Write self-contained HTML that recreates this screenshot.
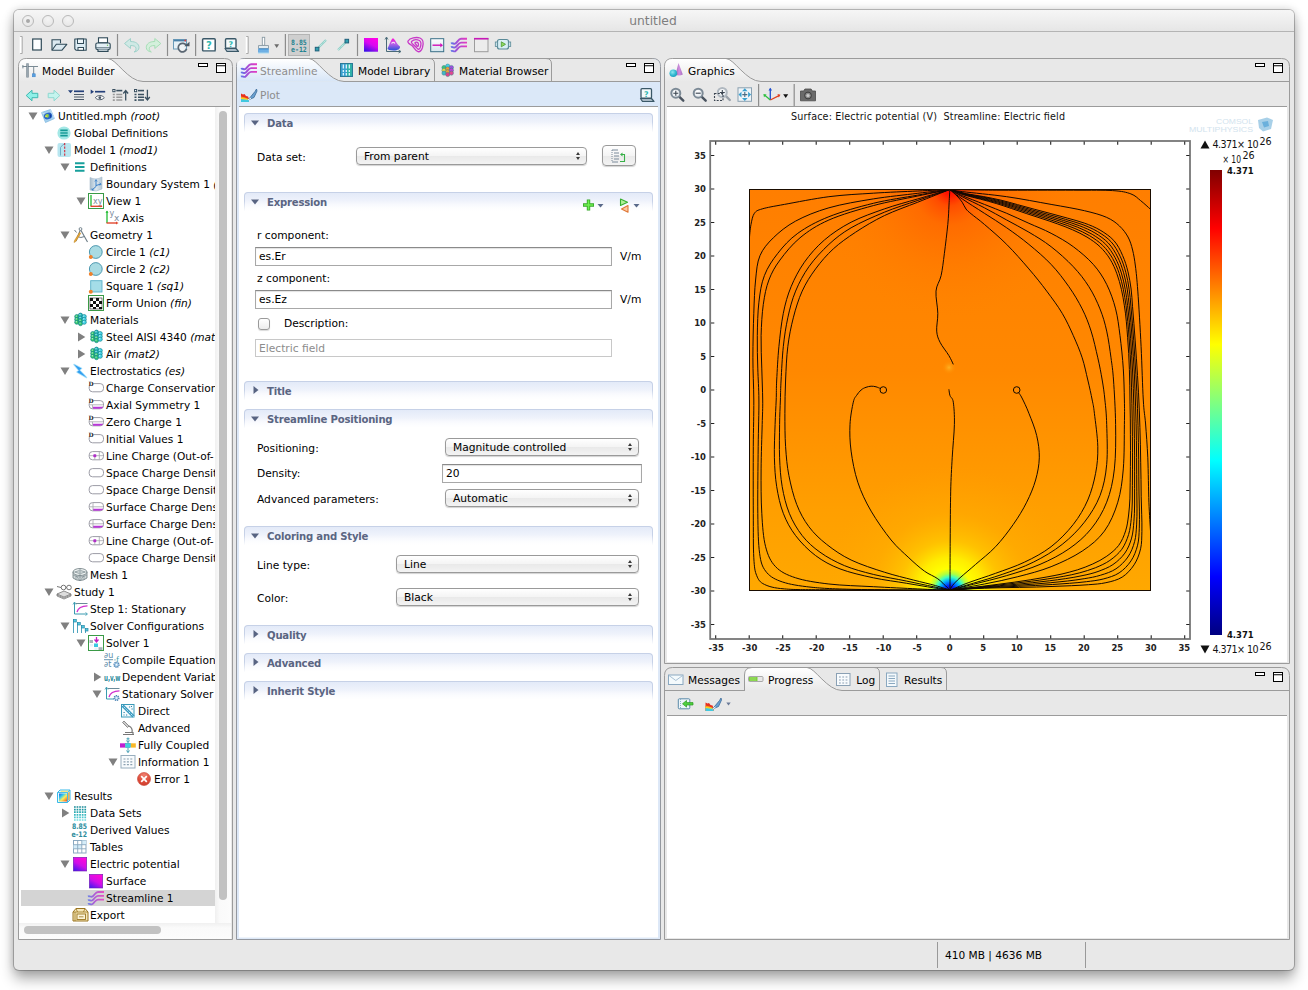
<!DOCTYPE html>
<html>
<head>
<meta charset="utf-8">
<title>untitled</title>
<style>
*{box-sizing:border-box;margin:0;padding:0}
html,body{width:1308px;height:990px;overflow:hidden;background:#fff}
body{font-family:"DejaVu Sans","Liberation Sans",sans-serif;font-size:10.6px;color:#000;position:relative}
.abs{position:absolute}
#win{position:absolute;left:14px;top:10px;width:1280px;height:960px;background:#e8e8e8;border-radius:5px;box-shadow:0 0 0 1px rgba(0,0,0,.22),0 9px 14px rgba(0,0,0,.32),0 0 10px rgba(0,0,0,.18)}
#titlebar{position:absolute;left:0;top:0;width:1280px;height:22px;border-radius:5px 5px 0 0;background:linear-gradient(#f6f6f6,#e6e6e6);border-bottom:1px solid #b4b4b4}
#title{position:absolute;left:-1px;width:1280px;top:4px;text-align:center;font-size:12.3px;color:#7e7e7e}
.tl{position:absolute;top:5px;width:12px;height:12px;border-radius:50%;border:1px solid #b9b9b9;background:radial-gradient(circle at 50% 30%,#f4f4f4,#e4e4e4)}
.panel{position:absolute;border:1px solid #9c9c9c;background:#e8e8e8}
.t{position:absolute;white-space:nowrap;line-height:14px}
svg{position:absolute;overflow:visible}
</style>
</head>
<body>
<div id="win">
<div id="titlebar">
<div class="tl" style="left:8px"><div style="position:absolute;left:3px;top:3px;width:4px;height:4px;border-radius:50%;background:#a8a8a8"></div></div>
<div class="tl" style="left:28px"></div>
<div class="tl" style="left:48px"></div>
<div id="title">untitled</div>
</div>
</div>
<style>
.pb{stroke:#9b9b9b;stroke-width:1;fill:none}
.tabtxt{position:absolute;white-space:nowrap;font-size:10.6px;line-height:14px}
.mm{position:absolute;border:1.5px solid #000;background:#fff}
.mx{box-shadow:inset 0 1.2px 0 #fff,inset 0 2.2px 0 #000}
</style>
<!-- LEFT PANEL : Model Builder -->
<svg class="abs" style="left:0;top:0" width="1308" height="990" viewBox="0 0 1308 990">
<defs>
<linearGradient id="gTabG" x1="0" y1="0" x2="0" y2="1"><stop offset="0" stop-color="#ffffff"/><stop offset="1" stop-color="#e8e8e8"/></linearGradient>
<linearGradient id="gTabB" x1="0" y1="0" x2="0" y2="1"><stop offset="0" stop-color="#ffffff"/><stop offset="1" stop-color="#d6e5f7"/></linearGradient>
</defs>
<!-- left panel -->
<path class="pb" d="M18.5 939.5 V66.5 Q18.5 58.5 26.5 58.5 H224.5 Q232.5 58.5 232.5 66.5 V939.5 Z" fill="#e8e8e8"/>
<path d="M19 82 V66.5 Q19 59 26.5 59 H108 C116 59 128 81.5 143 81.5 H19Z" fill="url(#gTabG)"/>
<path class="pb" d="M108 58.5 C116 58.5 128 81.5 143 81.5 H232"/>
<line class="pb" x1="19" y1="106.500" x2="230" y2="106.500"/>
<!-- middle panel -->
<path d="M236.500 939.5 V66.5 Q236.500 58.5 244.5 58.5 H652.5 Q660.5 58.5 660.5 66.5 V939.5 Z" fill="#dde8f7" stroke="#94989f"/>
<path d="M237 59 H652.5 Q660 59 660 66.500 V81.5 H237Z" fill="#e8e8e8"/>
<path d="M237 82 V66.5 Q237 59 244.5 59 H309 C317 59 329 81.5 344 81.5 H237Z" fill="url(#gTabB)"/>
<path class="pb" d="M244.5 58.5 H652.5"/>
<path class="pb" d="M309 58.5 C317 58.5 329 81.5 344 81.5 H660"/>
<path class="pb" d="M429 58.5 Q434.500 58.500 434.500 64 V81.500"/>
<path class="pb" d="M546 58.5 Q551.500 58.500 551.500 64 V81.500"/>
<rect x="237" y="82" width="423" height="24" fill="#dbe8f8"/>
<line class="pb" x1="239" y1="106.500" x2="658" y2="106.500"/>
<rect x="239" y="107" width="419" height="830.5" fill="#fff"/>
<!-- graphics panel -->
<path class="pb" d="M664.500 663.500 V66.5 Q664.500 58.5 672.5 58.5 H1281.500 Q1289.500 58.5 1289.500 66.5 V663.5 Z" fill="#e8e8e8"/>
<path d="M665 82 V66.5 Q665 59 672.5 59 H726 C734 59 746 81.5 761 81.5 H665Z" fill="url(#gTabG)"/>
<path class="pb" d="M726 58.5 C734 58.5 746 81.5 761 81.5 H1289"/>
<line class="pb" x1="667" y1="106.500" x2="1287" y2="106.500"/>
<rect x="667" y="107" width="620" height="555" fill="#fff"/>
<!-- bottom right panel -->
<path class="pb" d="M664.500 939.500 V675.500 Q664.500 667.500 672.5 667.500 H1281.500 Q1289.500 667.5 1289.500 675.500 V939.500 Z" fill="#e8e8e8"/>
<path d="M744.500 691 V675 Q744.500 668 752 668 H807 C815 668 827 690.5 842 690.5 H745Z" fill="url(#gTabG)"/>
<path class="pb" d="M744.500 690.500 V675 Q744.500 667.500 752 667.500 H807 C815 667.5 827 690.5 842 690.5 H1289"/>
<line class="pb" x1="665" y1="690.500" x2="745" y2="690.500"/>
<path class="pb" d="M874 667.500 Q879.500 667.500 879.500 673 V690.500"/>
<path class="pb" d="M941 667.500 Q946.500 667.500 946.500 673 V690.500"/>
<line class="pb" x1="667" y1="715.500" x2="1287" y2="715.500"/>
<rect x="667" y="716" width="620" height="222" fill="#fff"/>
<!-- status bar -->
<line x1="937.500" y1="942" x2="937.500" y2="968" stroke="#999"/>
<line x1="1085.500" y1="942" x2="1085.500" y2="968" stroke="#999"/>
</svg>
<div class="tabtxt" style="left:42px;top:63.7px">Model Builder</div>
<div class="tabtxt" style="left:260px;top:63.7px;color:#8c8c8c">Streamline</div>
<div class="tabtxt" style="left:358px;top:63.7px">Model Library</div>
<div class="tabtxt" style="left:459px;top:63.7px">Material Browser</div>
<div class="tabtxt" style="left:688px;top:63.7px">Graphics</div>
<div class="tabtxt" style="left:688px;top:672.7px">Messages</div>
<div class="tabtxt" style="left:768px;top:672.7px">Progress</div>
<div class="tabtxt" style="left:856.3px;top:672.7px">Log</div>
<div class="tabtxt" style="left:904px;top:672.7px">Results</div>
<div class="tabtxt" style="left:260px;top:88px;color:#8c8c8c">Plot</div>
<div class="tabtxt" style="left:945px;top:948px">410 MB | 4636 MB</div>
<!-- min/max icons -->
<div class="mm" style="left:198px;top:63px;width:10px;height:4px"></div><div class="mm mx" style="left:216px;top:63px;width:10px;height:10px"></div>
<div class="mm" style="left:626px;top:63px;width:10px;height:4px"></div><div class="mm mx" style="left:644px;top:63px;width:10px;height:10px"></div>
<div class="mm" style="left:1255px;top:63px;width:10px;height:4px"></div><div class="mm mx" style="left:1273px;top:63px;width:10px;height:10px"></div>
<div class="mm" style="left:1255px;top:672px;width:10px;height:4px"></div><div class="mm mx" style="left:1273px;top:672px;width:10px;height:10px"></div>
<style>
#tree{position:absolute;left:21px;top:107px;width:194px;height:816px;background:#fff;overflow:hidden}
#tree .r{position:absolute;left:0;width:194px;height:17px}
#tree .r.sel{background:linear-gradient(#d4d4d4,#d4d4d4) 0 0/100% 16px no-repeat}
#tree .tx{position:absolute;top:0;line-height:17px;white-space:nowrap;font-size:10.6px}
#tree .tx i{font-style:italic}
#tree svg.ic{position:absolute;width:16px;height:16px;top:0.5px}
#tree svg.ar{position:absolute;width:10px;height:10px;top:3.2px}
</style>
<svg width="0" height="0" style="position:absolute"><defs><radialGradient id="gErr" cx=".5" cy=".2" r=".9"><stop offset="0" stop-color="#f08070"/><stop offset=".6" stop-color="#dc4a38"/><stop offset="1" stop-color="#c83828"/></radialGradient><linearGradient id="gRes" x1="0" y1="0" x2="1" y2="1"><stop offset="0" stop-color="#2060e0"/><stop offset=".3" stop-color="#30c8f0"/><stop offset=".55" stop-color="#f8f060"/><stop offset=".8" stop-color="#f89030"/><stop offset="1" stop-color="#e83020"/></linearGradient><linearGradient id="gBs" x1="0" y1="0" x2="1" y2="0"><stop offset="0" stop-color="#a8bccc"/><stop offset=".5" stop-color="#dce8f0"/><stop offset="1" stop-color="#b4c6d4"/></linearGradient><linearGradient id="gEpot" x1=".7" y1="0" x2=".15" y2="1"><stop offset="0" stop-color="#ff08d8"/><stop offset=".5" stop-color="#d010e8"/><stop offset="1" stop-color="#4818f0"/></linearGradient><linearGradient id="gStrT" x1="0" y1="0" x2="16" y2="0" gradientUnits="userSpaceOnUse"><stop offset="0" stop-color="#6a80e8"/><stop offset=".35" stop-color="#a860d8"/><stop offset="1" stop-color="#e850c0"/></linearGradient></defs></svg>
<div class="abs" style="left:19px;top:107px;width:212px;height:832px;background:#fff"></div>
<div class="abs" style="left:215px;top:107px;width:16px;height:816px;background:linear-gradient(90deg,#f0f0f0,#fafafa 30%,#fcfcfc)"></div>
<div class="abs" style="left:219px;top:111px;width:8px;height:789px;border-radius:4px;background:#c2c2c2"></div>
<div class="abs" style="left:19px;top:923px;width:212px;height:16px;background:linear-gradient(#f0f0f0,#fafafa 30%,#fcfcfc)"></div>
<div class="abs" style="left:24px;top:926px;width:137px;height:8px;border-radius:4px;background:#c2c2c2"></div>
<div id="tree">
<div class="r" style="top:0.5px"><svg class="ar" style="left:7px" viewBox="0 0 10 10"><path d="M.5 1.500H9.500L5 9Z" fill="#808080"/></svg><svg class="ic" style="left:19px" viewBox="0 0 16 16"><path d="M1.500 4.500 L10.500 1.500 L14.500 10.500 L5.500 14.500Z" fill="#a4d0ee" stroke="#7ab4de" stroke-width=".7" stroke-linejoin="round"/><path d="M10.500 1.500L11.500 5L14.500 10.500M1.500 4.500L4.500 6" stroke="#d8ecfa" stroke-width=".7" fill="none"/><ellipse cx="8" cy="8" rx="4.200" ry="3.300" transform="rotate(-20 8 8)" fill="#2a66c8"/><path d="M5.200 7.500Q6.500 5.500 8.500 6.300Q9.500 8 8 9.800Q6 10 5.200 7.500Z" fill="#8fd048"/><path d="M5 8Q6 7 7 8.200Q6.300 9.500 5.300 9Z" fill="#f0e050"/><path d="M9.500 5.800Q12.500 7.500 10 10.500Q11 8 9.500 5.800Z" fill="#0c2f88"/></svg><span class="tx" style="left:37px">Untitled.mph<i> (root)</i></span></div>
<div class="r" style="top:17.5px"><svg class="ic" style="left:35px" viewBox="0 0 16 16"><circle cx="8" cy="8" r="6.600" fill="#a4e8e6"/><path d="M4.300 5.300H11.700M4.300 8H11.700M4.300 10.700H11.700" stroke="#149a96" stroke-width="1.700"/></svg><span class="tx" style="left:53px">Global Definitions</span></div>
<div class="r" style="top:34.5px"><svg class="ar" style="left:23px" viewBox="0 0 10 10"><path d="M.5 1.500H9.500L5 9Z" fill="#808080"/></svg><svg class="ic" style="left:35px" viewBox="0 0 16 16"><rect x="1.500" y="1" width="13.500" height="14" rx="2" fill="#b8e6f0"/><path d="M4.500 13.500V5.500Q6 3 9 1.500" fill="none" stroke="#6aa8c0" stroke-width=".9"/><path d="M8.700 1V15" stroke="#d6283a" stroke-width="1.100" stroke-dasharray="2.200 1.300"/></svg><span class="tx" style="left:53px">Model 1<i> (mod1)</i></span></div>
<div class="r" style="top:51.5px"><svg class="ar" style="left:39px" viewBox="0 0 10 10"><path d="M.5 1.500H9.500L5 9Z" fill="#808080"/></svg><svg class="ic" style="left:51px" viewBox="0 0 16 16"><path d="M3 4.300H12.500M3 8H12.500M3 11.700H12.500" stroke="#18a09c" stroke-width="1.900"/></svg><span class="tx" style="left:69px">Definitions</span></div>
<div class="r" style="top:68.5px"><svg class="ic" style="left:67px" viewBox="0 0 16 16"><path d="M2 1.500 Q8 4.500 14 1 V13 Q8 16.500 2 14Z" fill="url(#gBs)" stroke="#a8bccc" stroke-width=".6"/><path d="M8 4V10.500L4 14M8 9.500L13 8" stroke="#3b80c8" stroke-width="1" fill="none"/><path d="M6.800 5.500L8 3.500L9.200 5.500M11.500 7L13.200 8L11.800 9.500M4 12.300V14H5.800" stroke="#3b80c8" stroke-width=".8" fill="none"/></svg><span class="tx" style="left:85px">Boundary System 1<i> (sys1)</i></span></div>
<div class="r" style="top:85.5px"><svg class="ar" style="left:55px" viewBox="0 0 10 10"><path d="M.5 1.500H9.500L5 9Z" fill="#808080"/></svg><svg class="ic" style="left:67px" viewBox="0 0 16 16"><rect x=".5" y=".5" width="15" height="15" fill="#fff" stroke="#3a9a46" stroke-width="1"/><path d="M3 2V13" stroke="#30c040" stroke-width="1.400"/><path d="M2.500 13.300H14" stroke="#e04830" stroke-width="1.400"/><path d="M12.500 12L14.500 13.300L12.500 14.600Z" fill="#e04830"/><text x="5" y="10.500" font-size="9.500" textLength="9.500" lengthAdjust="spacingAndGlyphs" font-family="'DejaVu Sans','Liberation Sans',sans-serif" fill="#7a8a9c">xy</text></svg><span class="tx" style="left:85px">View 1</span></div>
<div class="r" style="top:102.5px"><svg class="ic" style="left:83px" viewBox="0 0 16 16"><path d="M3 1V13" stroke="#30c040" stroke-width="1.400"/><path d="M1.500 3L3 .5L4.500 3Z" fill="#30c040"/><path d="M2.500 13H13" stroke="#e04830" stroke-width="1.400"/><path d="M12 11.500L14.500 13L12 14.500Z" fill="#e04830"/><text x="5.500" y="5.500" font-size="8" font-family="'DejaVu Sans','Liberation Sans',sans-serif" fill="#7a8a9c">y</text><text x="10" y="11" font-size="9" font-family="'DejaVu Sans','Liberation Sans',sans-serif" fill="#7a8a9c">x</text></svg><span class="tx" style="left:101px">Axis</span></div>
<div class="r" style="top:119.5px"><svg class="ar" style="left:39px" viewBox="0 0 10 10"><path d="M.5 1.500H9.500L5 9Z" fill="#808080"/></svg><svg class="ic" style="left:51px" viewBox="0 0 16 16"><path d="M8.500 2.500 L4 14" stroke="#6a7a84" stroke-width="1.100"/><path d="M8.500 2.500 L15.500 15" stroke="#6a7a84" stroke-width="1.100"/><path d="M5 9.500 Q9 11.500 12.500 9.500" stroke="#6a7a84" stroke-width="1" fill="none"/><circle cx="8.500" cy="2" r="1.400" fill="#fff" stroke="#6a7a84" stroke-width=".9"/><path d="M2.500 3L4.500 5.500" stroke="#6a7a84" stroke-width="1"/><path d="M7.500 5.500 L2.500 13.500 L2 15.500 L3.800 14.500 L8.800 6.300Z" fill="#eaa838" stroke="#b8801e" stroke-width=".5"/></svg><span class="tx" style="left:69px">Geometry 1</span></div>
<div class="r" style="top:136.5px"><svg class="ic" style="left:67px" viewBox="0 0 16 16"><circle cx="7.800" cy="8" r="6.400" fill="#a9dbe3" stroke="#3f8fa8" stroke-width=".9"/><circle cx="2.800" cy="13" r="2" fill="#f0802a"/></svg><span class="tx" style="left:85px">Circle 1<i> (c1)</i></span></div>
<div class="r" style="top:153.5px"><svg class="ic" style="left:67px" viewBox="0 0 16 16"><circle cx="7.800" cy="8" r="6.400" fill="#a9dbe3" stroke="#3f8fa8" stroke-width=".9"/><circle cx="2.800" cy="13" r="2" fill="#f0802a"/></svg><span class="tx" style="left:85px">Circle 2<i> (c2)</i></span></div>
<div class="r" style="top:170.5px"><svg class="ic" style="left:67px" viewBox="0 0 16 16"><rect x="2.700" y="2.700" width="11.300" height="11.300" fill="#a4dde8" stroke="#5ab0c8" stroke-width=".9"/><circle cx="2.800" cy="13.700" r="2" fill="#f0802a"/></svg><span class="tx" style="left:85px">Square 1<i> (sq1)</i></span></div>
<div class="r" style="top:187.5px"><svg class="ic" style="left:67px" viewBox="0 0 16 16"><rect x=".5" y=".5" width="15" height="15" fill="#fff" stroke="#3a9a46" stroke-width="1"/><rect x="2" y="3" width="12" height="11" fill="#fff" stroke="#222" stroke-width=".6"/><path d="M2 3h3v3h-3zM8 3h3v3h-3zM5 6h3v3h-3zM11 6h3v3h-3zM2 9h3v3h-3zM8 9h3v3h-3zM5 12h3v2h-3zM11 12h3v2h-3z" fill="#111"/></svg><span class="tx" style="left:85px">Form Union<i> (fin)</i></span></div>
<div class="r" style="top:204.5px"><svg class="ar" style="left:39px" viewBox="0 0 10 10"><path d="M.5 1.500H9.500L5 9Z" fill="#808080"/></svg><svg class="ic" style="left:51px" viewBox="0 0 16 16"><g stroke="#178a8f" stroke-width=".7"><circle cx="4.8" cy="4.6" r="2.100" fill="#35c468"/><circle cx="4.8" cy="7.4" r="2.100" fill="#35c468"/><circle cx="4.8" cy="10.2" r="2.100" fill="#35c468"/><circle cx="8.5" cy="3.2" r="2.100" fill="#22b4c0"/><circle cx="8.5" cy="6" r="2.100" fill="#22b4c0"/><circle cx="8.5" cy="8.8" r="2.100" fill="#30c070"/><circle cx="8.5" cy="11.6" r="2.100" fill="#30c070"/><circle cx="12.2" cy="4.6" r="2.100" fill="#45d2ea"/><circle cx="12.2" cy="7.4" r="2.100" fill="#45d2ea"/><circle cx="12.2" cy="10.2" r="2.100" fill="#45d2ea"/></g><circle cx="4.3" cy="4.1" r=".7" fill="#d8fff0" opacity=".8"/><circle cx="4.3" cy="6.9" r=".7" fill="#d8fff0" opacity=".8"/><circle cx="4.3" cy="9.7" r=".7" fill="#d8fff0" opacity=".8"/><circle cx="8.0" cy="2.7" r=".7" fill="#d8fff0" opacity=".8"/><circle cx="8.0" cy="5.5" r=".7" fill="#d8fff0" opacity=".8"/><circle cx="8.0" cy="8.3" r=".7" fill="#d8fff0" opacity=".8"/><circle cx="8.0" cy="11.1" r=".7" fill="#d8fff0" opacity=".8"/><circle cx="11.7" cy="4.1" r=".7" fill="#d8fff0" opacity=".8"/><circle cx="11.7" cy="6.9" r=".7" fill="#d8fff0" opacity=".8"/><circle cx="11.7" cy="9.7" r=".7" fill="#d8fff0" opacity=".8"/></svg><span class="tx" style="left:69px">Materials</span></div>
<div class="r" style="top:221.5px"><svg class="ar" style="left:55px" viewBox="0 0 10 10"><path d="M2 .5V9.500L9.300 5Z" fill="#808080"/></svg><svg class="ic" style="left:67px" viewBox="0 0 16 16"><g stroke="#178a8f" stroke-width=".7"><circle cx="4.8" cy="4.6" r="2.100" fill="#35c468"/><circle cx="4.8" cy="7.4" r="2.100" fill="#35c468"/><circle cx="4.8" cy="10.2" r="2.100" fill="#35c468"/><circle cx="8.5" cy="3.2" r="2.100" fill="#22b4c0"/><circle cx="8.5" cy="6" r="2.100" fill="#22b4c0"/><circle cx="8.5" cy="8.8" r="2.100" fill="#30c070"/><circle cx="8.5" cy="11.6" r="2.100" fill="#30c070"/><circle cx="12.2" cy="4.6" r="2.100" fill="#45d2ea"/><circle cx="12.2" cy="7.4" r="2.100" fill="#45d2ea"/><circle cx="12.2" cy="10.2" r="2.100" fill="#45d2ea"/></g><circle cx="4.3" cy="4.1" r=".7" fill="#d8fff0" opacity=".8"/><circle cx="4.3" cy="6.9" r=".7" fill="#d8fff0" opacity=".8"/><circle cx="4.3" cy="9.7" r=".7" fill="#d8fff0" opacity=".8"/><circle cx="8.0" cy="2.7" r=".7" fill="#d8fff0" opacity=".8"/><circle cx="8.0" cy="5.5" r=".7" fill="#d8fff0" opacity=".8"/><circle cx="8.0" cy="8.3" r=".7" fill="#d8fff0" opacity=".8"/><circle cx="8.0" cy="11.1" r=".7" fill="#d8fff0" opacity=".8"/><circle cx="11.7" cy="4.1" r=".7" fill="#d8fff0" opacity=".8"/><circle cx="11.7" cy="6.9" r=".7" fill="#d8fff0" opacity=".8"/><circle cx="11.7" cy="9.7" r=".7" fill="#d8fff0" opacity=".8"/></svg><span class="tx" style="left:85px">Steel AISI 4340<i> (mat1)</i></span></div>
<div class="r" style="top:238.5px"><svg class="ar" style="left:55px" viewBox="0 0 10 10"><path d="M2 .5V9.500L9.300 5Z" fill="#808080"/></svg><svg class="ic" style="left:67px" viewBox="0 0 16 16"><g stroke="#178a8f" stroke-width=".7"><circle cx="4.8" cy="4.6" r="2.100" fill="#35c468"/><circle cx="4.8" cy="7.4" r="2.100" fill="#35c468"/><circle cx="4.8" cy="10.2" r="2.100" fill="#35c468"/><circle cx="8.5" cy="3.2" r="2.100" fill="#22b4c0"/><circle cx="8.5" cy="6" r="2.100" fill="#22b4c0"/><circle cx="8.5" cy="8.8" r="2.100" fill="#30c070"/><circle cx="8.5" cy="11.6" r="2.100" fill="#30c070"/><circle cx="12.2" cy="4.6" r="2.100" fill="#45d2ea"/><circle cx="12.2" cy="7.4" r="2.100" fill="#45d2ea"/><circle cx="12.2" cy="10.2" r="2.100" fill="#45d2ea"/></g><circle cx="4.3" cy="4.1" r=".7" fill="#d8fff0" opacity=".8"/><circle cx="4.3" cy="6.9" r=".7" fill="#d8fff0" opacity=".8"/><circle cx="4.3" cy="9.7" r=".7" fill="#d8fff0" opacity=".8"/><circle cx="8.0" cy="2.7" r=".7" fill="#d8fff0" opacity=".8"/><circle cx="8.0" cy="5.5" r=".7" fill="#d8fff0" opacity=".8"/><circle cx="8.0" cy="8.3" r=".7" fill="#d8fff0" opacity=".8"/><circle cx="8.0" cy="11.1" r=".7" fill="#d8fff0" opacity=".8"/><circle cx="11.7" cy="4.1" r=".7" fill="#d8fff0" opacity=".8"/><circle cx="11.7" cy="6.9" r=".7" fill="#d8fff0" opacity=".8"/><circle cx="11.7" cy="9.7" r=".7" fill="#d8fff0" opacity=".8"/></svg><span class="tx" style="left:85px">Air<i> (mat2)</i></span></div>
<div class="r" style="top:255.5px"><svg class="ar" style="left:39px" viewBox="0 0 10 10"><path d="M.5 1.500H9.500L5 9Z" fill="#808080"/></svg><svg class="ic" style="left:51px" viewBox="0 0 16 16"><path d="M2 1.500 L9.500 5.500 L7.300 7 L14.500 14.500 L5 9 L7 7.500Z" fill="#2f9df0" stroke="#a8e0fa" stroke-width="1.500" stroke-linejoin="round" paint-order="stroke"/></svg><span class="tx" style="left:69px">Electrostatics<i> (es)</i></span></div>
<div class="r" style="top:272.5px"><svg class="ic" style="left:67px" viewBox="0 0 16 16"><rect x="1.200" y="3.600" width="14.300" height="8.200" rx="3.300" fill="#fff" stroke="#9c9ca6" stroke-width="1"/><rect x="0" y="1" width="5.300" height="5" fill="#fff"/><text x=".6" y="5.600" font-size="5.800" font-weight="bold" font-family="'DejaVu Serif','Liberation Serif',serif" fill="#222">D</text></svg><span class="tx" style="left:85px">Charge Conservation 1</span></div>
<div class="r" style="top:289.5px"><svg class="ic" style="left:67px" viewBox="0 0 16 16"><rect x="1.200" y="3.600" width="14.300" height="8.200" rx="3.300" fill="#fff" stroke="#9c9ca6" stroke-width="1"/><path d="M5 9.800H15.300Q14.800 11.700 11.500 11.700H5.500Q5.200 11.700 5 11.500Z" fill="#b838d8"/><path d="M1.400 7.800H15.400M4.500 7.800V11.500" stroke="#a4a4ac" stroke-width=".8" fill="none"/><rect x="0" y="1" width="5.300" height="5" fill="#fff"/><text x=".6" y="5.600" font-size="5.800" font-weight="bold" font-family="'DejaVu Serif','Liberation Serif',serif" fill="#222">D</text></svg><span class="tx" style="left:85px">Axial Symmetry 1</span></div>
<div class="r" style="top:306.5px"><svg class="ic" style="left:67px" viewBox="0 0 16 16"><rect x="1.200" y="3.600" width="14.300" height="8.200" rx="3.300" fill="#fff" stroke="#9c9ca6" stroke-width="1"/><path d="M5 9.800H15.300Q14.800 11.700 11.500 11.700H5.500Q5.200 11.700 5 11.500Z" fill="#b838d8"/><path d="M1.400 7.800H15.400M4.500 7.800V11.500" stroke="#a4a4ac" stroke-width=".8" fill="none"/><rect x="0" y="1" width="5.300" height="5" fill="#fff"/><text x=".6" y="5.600" font-size="5.800" font-weight="bold" font-family="'DejaVu Serif','Liberation Serif',serif" fill="#222">D</text></svg><span class="tx" style="left:85px">Zero Charge 1</span></div>
<div class="r" style="top:323.5px"><svg class="ic" style="left:67px" viewBox="0 0 16 16"><rect x="1.200" y="3.600" width="14.300" height="8.200" rx="3.300" fill="#fff" stroke="#9c9ca6" stroke-width="1"/><rect x="0" y="1" width="5.300" height="5" fill="#fff"/><text x=".6" y="5.600" font-size="5.800" font-weight="bold" font-family="'DejaVu Serif','Liberation Serif',serif" fill="#222">D</text></svg><span class="tx" style="left:85px">Initial Values 1</span></div>
<div class="r" style="top:340.5px"><svg class="ic" style="left:67px" viewBox="0 0 16 16"><rect x="1.200" y="3.600" width="14.300" height="8.200" rx="3.300" fill="#fff" stroke="#9c9ca6" stroke-width="1"/><path d="M1.400 7.700H15.400M11.300 3.800V11.600M6.800 7.700V11.600" stroke="#a4a4ac" stroke-width=".8"/><rect x="5.300" y="6.200" width="3" height="3" rx=".8" fill="#b030c8"/></svg><span class="tx" style="left:85px">Line Charge (Out-of-<span style="margin-left:3px">Plane) 1</span></span></div>
<div class="r" style="top:357.5px"><svg class="ic" style="left:67px" viewBox="0 0 16 16"><rect x="1.200" y="3.600" width="14.300" height="8.200" rx="3.300" fill="#fff" stroke="#9c9ca6" stroke-width="1"/></svg><span class="tx" style="left:85px">Space Charge Density 1</span></div>
<div class="r" style="top:374.5px"><svg class="ic" style="left:67px" viewBox="0 0 16 16"><rect x="1.200" y="3.600" width="14.300" height="8.200" rx="3.300" fill="#fff" stroke="#9c9ca6" stroke-width="1"/></svg><span class="tx" style="left:85px">Space Charge Density 2</span></div>
<div class="r" style="top:391.5px"><svg class="ic" style="left:67px" viewBox="0 0 16 16"><rect x="1.200" y="3.600" width="14.300" height="8.200" rx="3.300" fill="#fff" stroke="#9c9ca6" stroke-width="1"/><path d="M5 9.800H15.300Q14.800 11.700 11.500 11.700H5.500Q5.200 11.700 5 11.500Z" fill="#b838d8"/><path d="M1.400 7.800H15.400M5 3.800V11.500" stroke="#a4a4ac" stroke-width=".8" fill="none"/></svg><span class="tx" style="left:85px">Surface Charge Density 1</span></div>
<div class="r" style="top:408.5px"><svg class="ic" style="left:67px" viewBox="0 0 16 16"><rect x="1.200" y="3.600" width="14.300" height="8.200" rx="3.300" fill="#fff" stroke="#9c9ca6" stroke-width="1"/><path d="M5 9.800H15.300Q14.800 11.700 11.500 11.700H5.500Q5.200 11.700 5 11.500Z" fill="#b838d8"/><path d="M1.400 7.800H15.400M5 3.800V11.500" stroke="#a4a4ac" stroke-width=".8" fill="none"/></svg><span class="tx" style="left:85px">Surface Charge Density 2</span></div>
<div class="r" style="top:425.5px"><svg class="ic" style="left:67px" viewBox="0 0 16 16"><rect x="1.200" y="3.600" width="14.300" height="8.200" rx="3.300" fill="#fff" stroke="#9c9ca6" stroke-width="1"/><path d="M1.400 7.700H15.400M11.300 3.800V11.600M6.800 7.700V11.600" stroke="#a4a4ac" stroke-width=".8"/><rect x="5.300" y="6.200" width="3" height="3" rx=".8" fill="#b030c8"/></svg><span class="tx" style="left:85px">Line Charge (Out-of-<span style="margin-left:3px">Plane) 2</span></span></div>
<div class="r" style="top:442.5px"><svg class="ic" style="left:67px" viewBox="0 0 16 16"><rect x="1.200" y="3.600" width="14.300" height="8.200" rx="3.300" fill="#fff" stroke="#9c9ca6" stroke-width="1"/></svg><span class="tx" style="left:85px">Space Charge Density 3</span></div>
<div class="r" style="top:459.5px"><svg class="ic" style="left:51px" viewBox="0 0 16 16"><path d="M1 5 V11 Q8 16 15 11 V5" fill="#d4dadc" stroke="#6a787c" stroke-width=".8"/><ellipse cx="8" cy="5" rx="7" ry="3.500" fill="#eef2f2" stroke="#6a787c" stroke-width=".8"/><path d="M3 5 L8 3 L13 5 L8 7Z M8 1.500V8.500 M1 5H15 M4 8.500V13 M8 8.500V14 M12 8.500V13 M1 8 Q8 12 15 8 M4 8.500L8 14L12 8.500" fill="none" stroke="#7a8a8e" stroke-width=".6"/></svg><span class="tx" style="left:69px">Mesh 1</span></div>
<div class="r" style="top:476.5px"><svg class="ar" style="left:23px" viewBox="0 0 10 10"><path d="M.5 1.500H9.500L5 9Z" fill="#808080"/></svg><svg class="ic" style="left:35px" viewBox="0 0 16 16"><circle cx="7.500" cy="3.500" r="2.300" fill="#fff" stroke="#666" stroke-width=".9"/><circle cx="13" cy="3.500" r="2.300" fill="#fff" stroke="#666" stroke-width=".9"/><path d="M1 2.500 L5 3.500 M9.800 3.500H10.700" stroke="#666" stroke-width=".9"/><path d="M1 10 L8 7 L15 10 L8 13Z" fill="#ddd" stroke="#666" stroke-width=".7"/><path d="M1 10 V12 L8 15 L15 12 V10 M1 11 L8 14 L15 11" fill="none" stroke="#666" stroke-width=".7"/></svg><span class="tx" style="left:53px">Study 1</span></div>
<div class="r" style="top:493.5px"><svg class="ic" style="left:51px" viewBox="0 0 16 16"><path d="M2.500 1.500 V13 H15" fill="none" stroke="#3a9ab0" stroke-width="1"/><path d="M1 3.500L2.500 1L4 3.500M13.500 11.500L15.500 13L13.500 14.500" fill="none" stroke="#3a9ab0" stroke-width=".8"/><path d="M4 2.500H15.500" stroke="#6a8a98" stroke-width="1"/><path d="M5 11 Q6.500 5 15.500 4.800" fill="none" stroke="#d030d0" stroke-width="1.300"/></svg><span class="tx" style="left:69px">Step 1: Stationary</span></div>
<div class="r" style="top:510.5px"><svg class="ar" style="left:39px" viewBox="0 0 10 10"><path d="M.5 1.500H9.500L5 9Z" fill="#808080"/></svg><svg class="ic" style="left:51px" viewBox="0 0 16 16"><path d="M1.500 1V15M5.500 4V15M9.500 7V15M13.500 10V15" stroke="#3a9ab8" stroke-width=".9"/><rect x="1.500" y="1.500" width="2.800" height="2.500" fill="#50c8e0" stroke="#2a8aa8" stroke-width=".7"/><rect x="5.500" y="4.500" width="2.800" height="2.500" fill="#50c8e0" stroke="#2a8aa8" stroke-width=".7"/><rect x="9.500" y="7.500" width="2.800" height="2.500" fill="#50c8e0" stroke="#2a8aa8" stroke-width=".7"/><rect x="13.200" y="10.500" width="2.800" height="2.500" fill="#50c8e0" stroke="#2a8aa8" stroke-width=".7"/></svg><span class="tx" style="left:69px">Solver Configurations</span></div>
<div class="r" style="top:527.5px"><svg class="ar" style="left:55px" viewBox="0 0 10 10"><path d="M.5 1.500H9.500L5 9Z" fill="#808080"/></svg><svg class="ic" style="left:67px" viewBox="0 0 16 16"><rect x=".5" y=".5" width="15" height="15" fill="#fff" stroke="#3a9a46" stroke-width="1"/><rect x="1.500" y="5" width="3.500" height="3" fill="#a8b4b8"/><rect x="6" y="8.500" width="4" height="3.500" fill="#38c8e0"/><rect x="10.500" y="12.200" width="4" height="2.800" fill="#a8b4b8"/><rect x="2" y="9" width="3" height="2.500" fill="#e8f4f8"/><rect x="6.500" y="12.500" width="3" height="2.500" fill="#e8f4f8"/><path d="M8.500 2V6.500M6.500 4.500L8.500 7L10.500 4.500" fill="none" stroke="#c020c0" stroke-width="1.300"/></svg><span class="tx" style="left:85px">Solver 1</span></div>
<div class="r" style="top:544.5px"><svg class="ic" style="left:83px" viewBox="0 0 16 16"><text x="0" y="6.300" font-size="8" font-family="'DejaVu Sans','Liberation Sans',sans-serif" fill="#5a8aa8">∂u</text><path d="M0 7.700H9" stroke="#5a8aa8" stroke-width=".9"/><text x="0" y="15" font-size="8" font-family="'DejaVu Sans','Liberation Sans',sans-serif" fill="#5a8aa8">∂t</text><text x="9.500" y="9.500" font-size="7.500" font-family="'DejaVu Sans','Liberation Sans',sans-serif" fill="#3a9aa8">-f</text><circle cx="12.500" cy="12.700" r="2.500" fill="#a8cce8" stroke="#4a80b0" stroke-width="1.400" stroke-dasharray="1.100 .8"/><circle cx="12.500" cy="12.700" r=".8" fill="#fff"/></svg><span class="tx" style="left:101px">Compile Equations: Stationary</span></div>
<div class="r" style="top:561.5px"><svg class="ar" style="left:71px" viewBox="0 0 10 10"><path d="M2 .5V9.500L9.300 5Z" fill="#808080"/></svg><svg class="ic" style="left:83px" viewBox="0 0 16 16"><text x="0" y="11.500" font-size="9.500" font-weight="bold" textLength="16.500" lengthAdjust="spacingAndGlyphs" font-family="'DejaVu Sans','Liberation Sans',sans-serif" fill="#2a8a9a">u,v,w</text></svg><span class="tx" style="left:101px">Dependent Variables 1</span></div>
<div class="r" style="top:578.5px"><svg class="ar" style="left:71px" viewBox="0 0 10 10"><path d="M.5 1.500H9.500L5 9Z" fill="#808080"/></svg><svg class="ic" style="left:83px" viewBox="0 0 16 16"><path d="M2.500 1.500 V13 H10" fill="none" stroke="#3a9ab0" stroke-width="1"/><path d="M1 3.500L2.500 1L4 3.500" fill="none" stroke="#3a9ab0" stroke-width=".8"/><path d="M4 2.500H15.500" stroke="#6a8a98" stroke-width="1"/><path d="M5 11 Q6.500 5 15.500 4.800" fill="none" stroke="#d030d0" stroke-width="1.300"/><circle cx="12.500" cy="12" r="2.400" fill="#a8cce8" stroke="#4a80b0" stroke-width="1.300" stroke-dasharray="1.100 .8"/><circle cx="12.500" cy="12" r=".8" fill="#fff"/></svg><span class="tx" style="left:101px">Stationary Solver 1</span></div>
<div class="r" style="top:595.5px"><svg class="ic" style="left:99px" viewBox="0 0 16 16"><rect x="1.500" y="1.500" width="12.500" height="12.500" fill="#f4fbfd" stroke="#3a9ab8" stroke-width="1"/><path d="M2 2L13.500 13.500" stroke="#3a9ac0" stroke-width="3"/><path d="M2 2L13.500 13.500" stroke="#d8f0f8" stroke-width="1" stroke-dasharray="1.500 1"/><path d="M9 4h1.200M11.500 6h1.200M11 3.500h1M3.500 9.500h1.200M6 12h1.200M3.500 12h1" stroke="#2a7fa8" stroke-width="1.200"/></svg><span class="tx" style="left:117px">Direct</span></div>
<div class="r" style="top:612.5px"><svg class="ic" style="left:99px" viewBox="0 0 16 16"><path d="M4 1 L9 6 L7.500 7.500 L2.500 2.500Z" fill="#ccc" stroke="#777" stroke-width=".8"/><path d="M9 6 Q13 8 12 12.500" fill="none" stroke="#777" stroke-width="1.200"/><path d="M3 14.500H14 M5 12.500H13V14.500" fill="none" stroke="#777" stroke-width="1.200"/></svg><span class="tx" style="left:117px">Advanced</span></div>
<div class="r" style="top:629.5px"><svg class="ic" style="left:99px" viewBox="0 0 16 16"><rect x="0" y="6.300" width="5" height="4.300" fill="#c020d0"/><rect x="5.500" y="6.300" width="5" height="4.300" fill="#40d0e0" stroke="#2a9ab0" stroke-width=".5"/><rect x="11" y="6.300" width="4.800" height="4.300" fill="#f8b828"/><path d="M8 .5V5.500M6.500 3.500L8 5.500L9.500 3.500M6.500 1.800H9.500M8 11V15.500M6.500 13.500L8 15.500L9.500 13.500" fill="none" stroke="#3a9ab0" stroke-width=".9"/></svg><span class="tx" style="left:117px">Fully Coupled<span style="margin-left:4px"> 1</span></span></div>
<div class="r" style="top:646.5px"><svg class="ar" style="left:87px" viewBox="0 0 10 10"><path d="M.5 1.500H9.500L5 9Z" fill="#808080"/></svg><svg class="ic" style="left:99px" viewBox="0 0 16 16"><rect x="1" y="1.500" width="14" height="12.500" fill="#f8fbfd" stroke="#98aebe" stroke-width="1"/><path d="M3.500 5h9.500M3.500 7.800h9.500M3.500 10.600h9.500" stroke="#8aa0b0" stroke-width="1.200" stroke-dasharray="2 1.400"/></svg><span class="tx" style="left:117px">Information 1</span></div>
<div class="r" style="top:663.5px"><svg class="ic" style="left:115px" viewBox="0 0 16 16"><circle cx="8" cy="8" r="6.500" fill="url(#gErr)" stroke="#c84030" stroke-width=".6"/><path d="M5.200 5.200L10.800 10.800M10.800 5.200L5.200 10.800" stroke="#fff" stroke-width="1.700"/></svg><span class="tx" style="left:133px">Error 1</span></div>
<div class="r" style="top:680.5px"><svg class="ar" style="left:23px" viewBox="0 0 10 10"><path d="M.5 1.500H9.500L5 9Z" fill="#808080"/></svg><svg class="ic" style="left:35px" viewBox="0 0 16 16"><path d="M1.500 4.500 L4 2 H14 V12 L11.500 14.500 H1.500Z" fill="#e8f8ff" stroke="#38b8e8" stroke-width="1" stroke-linejoin="round"/><path d="M3 5.500H11.500V13.500H3Z" fill="url(#gRes)"/><path d="M1.500 4.500H11.500V14.500M11.500 4.500L14 2" fill="none" stroke="#38b8e8" stroke-width=".9"/><path d="M12.200 4.800L13.500 3.500V11.500L12.200 12.800Z" fill="#f0a030"/><path d="M4.300 3.800L5.300 2.800H12.700L11.700 3.800Z" fill="#f8e060"/></svg><span class="tx" style="left:53px">Results</span></div>
<div class="r" style="top:697.5px"><svg class="ar" style="left:39px" viewBox="0 0 10 10"><path d="M2 .5V9.500L9.300 5Z" fill="#808080"/></svg><svg class="ic" style="left:51px" viewBox="0 0 16 16"><g stroke-dasharray="1.700 .9" stroke-width="1.700"><path d="M2 2H15" stroke="#1a8a98"/><path d="M2 4.600H15" stroke="#1f98a4"/><path d="M2 7.200H15" stroke="#28a8b0"/><path d="M2 9.800H15" stroke="#38b8c0"/><path d="M2 12.400H15" stroke="#50c8d0"/><path d="M2 15H15" stroke="#70dce0"/></g></svg><span class="tx" style="left:69px">Data Sets</span></div>
<div class="r" style="top:714.5px"><svg class="ic" style="left:51px" viewBox="0 0 16 16"><text x="0" y="7" font-size="7.600" font-weight="bold" textLength="15" lengthAdjust="spacingAndGlyphs" font-family="'DejaVu Sans','Liberation Sans',sans-serif" fill="#2a8c9c">8.85</text><text x="-.5" y="14.800" font-size="7.600" font-weight="bold" textLength="15.500" lengthAdjust="spacingAndGlyphs" font-family="'DejaVu Sans','Liberation Sans',sans-serif" fill="#2a8c9c">e-12</text></svg><span class="tx" style="left:69px">Derived Values</span></div>
<div class="r" style="top:731.5px"><svg class="ic" style="left:51px" viewBox="0 0 16 16"><rect x="1.500" y="1.500" width="12.500" height="12.500" fill="#fff" stroke="#8aa8c0" stroke-width="1"/><path d="M5.700 5.700h4.100v4.100h-4.100zM9.800 1.500h4.200v4.200h-4.200zM1.500 5.700h4.200v4.100h-4.200z" fill="#d4ecf8"/><path d="M1.500 5.700H14M1.500 9.800H14M5.700 1.500V14M9.800 1.500V14" stroke="#8aa8c0" stroke-width=".9"/></svg><span class="tx" style="left:69px">Tables</span></div>
<div class="r" style="top:748.5px"><svg class="ar" style="left:39px" viewBox="0 0 10 10"><path d="M.5 1.500H9.500L5 9Z" fill="#808080"/></svg><svg class="ic" style="left:51px" viewBox="0 0 16 16"><rect x="1.300" y="1.300" width="13.400" height="13.700" fill="url(#gEpot)" stroke="#6a20b0" stroke-width=".6"/></svg><span class="tx" style="left:69px">Electric potential</span></div>
<div class="r" style="top:765.5px"><svg class="ic" style="left:67px" viewBox="0 0 16 16"><rect x="1.300" y="1.300" width="13.400" height="13.700" fill="url(#gEpot)" stroke="#6a20b0" stroke-width=".6"/></svg><span class="tx" style="left:85px">Surface</span></div>
<div class="r sel" style="top:782.5px"><svg class="ic" style="left:67px" viewBox="0 0 16 16"><g fill="none" stroke-width="1.800"><path d="M0 6.500C1.500 5.500 3 7.500 4.500 6.500C7 4.500 7.500 2 10 2H16" stroke="url(#gStrT)"/><path d="M0 10.300C1.500 9.300 3 11.300 4.500 10.300C7 8.300 7.500 5.800 10 5.800H16" stroke="url(#gStrT)"/><path d="M0 14.100C1.500 13.100 3 15.100 4.500 14.100C7 12.100 7.500 9.600 10 9.600H16" stroke="url(#gStrT)"/></g></svg><span class="tx" style="left:85px">Streamline 1</span></div>
<div class="r" style="top:799.5px"><svg class="ic" style="left:51px" viewBox="0 0 16 16"><path d="M1 5 L4 1.500 H13 L16 5 V14 H1Z" fill="#f6e8b8" stroke="#9a7420" stroke-width="1" stroke-linejoin="round"/><path d="M1 5 H16 M4 1.500 L5.500 5 M13 1.500 L11.500 5" fill="none" stroke="#9a7420" stroke-width=".8"/><rect x="5" y="7" width="8.500" height="5.500" fill="#fbf4d8" stroke="#9a7420" stroke-width=".9"/><path d="M7 9.800H11.500M3 5V14" stroke="#9a7420" stroke-width=".8"/></svg><span class="tx" style="left:69px">Export</span></div>
</div>
<style>
.sec{position:absolute;left:244px;width:409px;height:22px;border:1px solid #c6d1e7;border-bottom:none;border-radius:4px 4px 0 0;background:linear-gradient(#e3eaf8,#f1f4fc 45%,#ffffff 95%)}
.sec:after{content:"";position:absolute;left:-1px;right:-1px;top:8px;bottom:0;background:linear-gradient(rgba(255,255,255,0),#fff 80%);pointer-events:none}
#noop{} .sech{position:absolute;font-weight:bold;font-size:10.1px;letter-spacing:-.2px;color:#5a6582;white-space:nowrap;line-height:14px;left:267px}
.lbl{position:absolute;white-space:nowrap;line-height:14px;font-size:10.7px}
.dd{position:absolute;height:17.5px;border:1px solid #9a9a9a;border-radius:4px;background:linear-gradient(#ffffff,#f4f4f4 50%,#e9e9e9 51%,#f3f3f3);box-shadow:0 1px 1px rgba(0,0,0,.18);font-size:10.7px;line-height:17.6px;padding-left:7px;white-space:nowrap}
.dd:after{content:"";position:absolute;right:6.3px;top:3.7px;border:2.500px solid transparent;border-bottom:3.300px solid #3a3a3a;border-top:none}
.dd:before{content:"";position:absolute;right:6.3px;top:9.2px;border:2.500px solid transparent;border-top:3.300px solid #3a3a3a;border-bottom:none}
.inp{position:absolute;height:19px;border:1px solid #a8a8a8;border-top-color:#8a8a8a;background:#fff;font-size:10.7px;line-height:17px;padding-left:3px;white-space:nowrap;box-shadow:inset 0 1px 1px rgba(0,0,0,.12)}
</style>
<div class="sec" style="top:113px"></div><svg class="abs" style="left:251px;top:120px" width="8" height="6" viewBox="0 0 8 6"><path d="M0 .5H8L4 5.500Z" fill="#586482"/></svg><div class="sech" style="top:116.6px">Data</div>
<div class="lbl" style="left:257px;top:150.5px;color:#000">Data set:</div>
<div class="dd" style="left:356px;top:147px;width:231.3px">From parent</div>
<div class="abs" style="left:602px;top:145px;width:34px;height:21px;border:1px solid #9a9a9a;border-radius:4px;background:linear-gradient(#ffffff,#f4f4f4 50%,#e9e9e9 51%,#f3f3f3);box-shadow:0 1px 1px rgba(0,0,0,.18)"></div>
<svg class="abs" style="left:611px;top:148px" width="16" height="16" viewBox="0 0 16 16"><path d="M1 2H7M3 5H8M3 8H8M3 11H8M1 14H7" stroke="#7a8a9a" stroke-width="1"/><path d="M1 2V14" stroke="#7a8a9a" stroke-width="1" stroke-dasharray="1 1"/><path d="M9 13.500H13.500V6.500H10" fill="none" stroke="#38b048" stroke-width="1.100"/><path d="M11.500 4.500L9 6.500L11.500 8.500Z" fill="#38b048"/></svg>
<div class="sec" style="top:192.3px"></div><svg class="abs" style="left:251px;top:199.3px" width="8" height="6" viewBox="0 0 8 6"><path d="M0 .5H8L4 5.500Z" fill="#586482"/></svg><div class="sech" style="top:195.9px">Expression</div>
<svg class="abs" style="left:582px;top:198px" width="24" height="14" viewBox="0 0 24 14"><path d="M6.500 1.500V12.500M1 7H12" stroke="#34a828" stroke-width="3.400"/><path d="M6.500 2.300V11.700M1.800 7H11.200" stroke="#70f050" stroke-width="1.700"/><path d="M15.500 6H21.500L18.500 9.500Z" fill="#5a6a8a"/></svg>
<svg class="abs" style="left:618px;top:197px" width="24" height="16" viewBox="0 0 24 16"><path d="M2.500 2L9.500 5.300L2.500 8.500Z" fill="#b0f098" stroke="#38b030" stroke-width="1.100" stroke-linejoin="round"/><path d="M10 8.500L3.500 12L10 15.300Z" fill="#fcc8a0" stroke="#e07838" stroke-width="1.100" stroke-linejoin="round"/><path d="M15.500 7H21.500L18.500 10.500Z" fill="#5a6a8a"/></svg>
<div class="lbl" style="left:257px;top:228.5px;color:#000">r component:</div>
<div class="inp" style="left:255px;top:247px;width:357px;height:19px;line-height:18.6px;">es.Er</div>
<div class="lbl" style="left:620px;top:249.5px;color:#000">V/m</div>
<div class="lbl" style="left:257px;top:271.5px;color:#000">z component:</div>
<div class="inp" style="left:255px;top:290px;width:357px;height:19px;line-height:18.6px;">es.Ez</div>
<div class="lbl" style="left:620px;top:292.5px;color:#000">V/m</div>
<div class="abs" style="left:258px;top:318px;width:12px;height:12px;border:1px solid #9a9a9a;border-radius:3px;background:linear-gradient(#fff,#ececec);box-shadow:0 1px 1px rgba(0,0,0,.15)"></div>
<div class="lbl" style="left:284px;top:316.5px;color:#000">Description:</div>
<div class="inp" style="left:255px;top:339px;width:357px;height:18px;line-height:17.6px;color:#8c8c8c;border-color:#c8c8c8;box-shadow:none;">Electric field</div>
<div class="sec" style="top:381px"></div><svg class="abs" style="left:253px;top:386px" width="6" height="8" viewBox="0 0 6 8"><path d="M.5 0V8L5.500 4Z" fill="#586482"/></svg><div class="sech" style="top:384.6px">Title</div>
<div class="sec" style="top:409px"></div><svg class="abs" style="left:251px;top:416px" width="8" height="6" viewBox="0 0 8 6"><path d="M0 .5H8L4 5.500Z" fill="#586482"/></svg><div class="sech" style="top:412.6px">Streamline Positioning</div>
<div class="lbl" style="left:257px;top:441.5px;color:#000">Positioning:</div>
<div class="dd" style="left:445px;top:438px;width:194.3px">Magnitude controlled</div>
<div class="lbl" style="left:257px;top:466.5px;color:#000">Density:</div>
<div class="inp" style="left:442px;top:464.3px;width:200px;height:18.7px;line-height:18.3px;">20</div>
<div class="lbl" style="left:257px;top:492.5px;color:#000">Advanced parameters:</div>
<div class="dd" style="left:445px;top:489px;width:194.3px">Automatic</div>
<div class="sec" style="top:526px"></div><svg class="abs" style="left:251px;top:533px" width="8" height="6" viewBox="0 0 8 6"><path d="M0 .5H8L4 5.500Z" fill="#586482"/></svg><div class="sech" style="top:529.6px">Coloring and Style</div>
<div class="lbl" style="left:257px;top:558.5px;color:#000">Line type:</div>
<div class="dd" style="left:396px;top:555px;width:243.3px">Line</div>
<div class="lbl" style="left:257px;top:591.5px;color:#000">Color:</div>
<div class="dd" style="left:396px;top:588px;width:243.3px">Black</div>
<div class="sec" style="top:625px"></div><svg class="abs" style="left:253px;top:630px" width="6" height="8" viewBox="0 0 6 8"><path d="M.5 0V8L5.500 4Z" fill="#586482"/></svg><div class="sech" style="top:628.6px">Quality</div>
<div class="sec" style="top:653px"></div><svg class="abs" style="left:253px;top:658px" width="6" height="8" viewBox="0 0 6 8"><path d="M.5 0V8L5.500 4Z" fill="#586482"/></svg><div class="sech" style="top:656.6px">Advanced</div>
<div class="sec" style="top:681px"></div><svg class="abs" style="left:253px;top:686px" width="6" height="8" viewBox="0 0 6 8"><path d="M.5 0V8L5.500 4Z" fill="#586482"/></svg><div class="sech" style="top:684.6px">Inherit Style</div>
<svg class="abs" style="left:667px;top:107px" width="620" height="555" viewBox="667 107 620 555">
<defs>
<linearGradient id="gSurf" x1="0" y1="0" x2="0" y2="1"><stop offset="0" stop-color="#ff7e00"/><stop offset=".45" stop-color="#ff8800"/><stop offset=".8" stop-color="#ff9f00"/><stop offset="1" stop-color="#ffa800"/></linearGradient>
<radialGradient id="gSrc" cx="949.8" cy="189" r="130" gradientUnits="userSpaceOnUse"><stop offset="0" stop-color="#ff0000"/><stop offset=".05" stop-color="#ff1000" stop-opacity=".92"/><stop offset=".13" stop-color="#ff2c00" stop-opacity=".6"/><stop offset=".28" stop-color="#ff4800" stop-opacity=".36"/><stop offset=".6" stop-color="#ff5c00" stop-opacity=".16"/><stop offset="1" stop-color="#ff7d00" stop-opacity="0"/></radialGradient>
<radialGradient id="gSnk" cx="950" cy="590.500" r="125" gradientUnits="userSpaceOnUse"><stop offset="0.000" stop-color="#000090"/><stop offset="0.040" stop-color="#0020ff"/><stop offset="0.080" stop-color="#00b0ff"/><stop offset="0.108" stop-color="#40ffc0"/><stop offset="0.136" stop-color="#b0ff40"/><stop offset="0.176" stop-color="#ffff00"/><stop offset="0.264" stop-color="#fff000" stop-opacity="0.95"/><stop offset="0.400" stop-color="#ffd400" stop-opacity="0.62"/><stop offset="0.624" stop-color="#ffb800" stop-opacity="0.3"/><stop offset="1.000" stop-color="#ffa800" stop-opacity="0"/></radialGradient>
<radialGradient id="gSpot" cx="949" cy="367.500" r="7" gradientUnits="userSpaceOnUse"><stop offset="0" stop-color="#ffb020"/><stop offset="1" stop-color="#ff8c00" stop-opacity="0"/></radialGradient>
<linearGradient id="gJet" x1="0" y1="0" x2="0" y2="1"><stop offset="0" stop-color="#800000"/><stop offset=".125" stop-color="#ff0000"/><stop offset=".375" stop-color="#ffff00"/><stop offset=".5" stop-color="#80ff80"/><stop offset=".625" stop-color="#00ffff"/><stop offset=".875" stop-color="#0000ff"/><stop offset="1" stop-color="#000080"/></linearGradient>
<clipPath id="cpS"><rect x="749.500" y="189.500" width="401" height="401"/></clipPath>
</defs>
<rect x="749.500" y="189.500" width="401" height="401" fill="url(#gSurf)"/>
<g clip-path="url(#cpS)"><circle cx="949.8" cy="189" r="130" fill="url(#gSrc)"/><circle cx="950" cy="590.500" r="125" fill="url(#gSnk)"/><circle cx="949" cy="367.500" r="7" fill="url(#gSpot)"/>
<g fill="none" stroke="#140900" stroke-width="1" stroke-linejoin="round">
<path d="M749.3 238.9C749.6 236.5 750.1 228.7 751.0 224.4C751.9 220.1 752.5 215.9 754.4 213.3C756.3 210.7 757.2 210.4 762.2 208.9C767.2 207.4 773.3 206.4 784.4 204.4C795.5 202.4 814.1 198.6 828.9 196.7C843.7 194.8 858.5 194.1 873.3 193.2C888.1 192.2 905.0 191.6 917.8 191.0C930.5 190.4 944.5 189.8 949.8 189.5"/>
<path d="M949.8 189.5C944.5 190.1 930.5 191.7 917.8 193.3C905.0 194.9 888.1 196.5 873.3 198.9C858.5 201.3 841.8 204.1 828.9 207.8C816.0 211.5 804.9 216.1 795.6 221.1C786.3 226.1 779.2 232.1 773.3 237.8C767.4 243.6 763.0 248.6 760.0 255.6C757.0 262.6 756.6 270.4 755.6 280.0C754.6 289.6 754.2 300.3 753.8 313.3C753.3 326.3 752.9 343.4 752.9 357.8C752.9 372.2 753.7 385.2 753.8 400.0C753.9 414.8 753.4 427.8 753.3 446.7C753.2 465.6 753.2 494.8 753.3 513.3C753.4 531.8 753.2 547.4 753.8 557.8C754.4 568.2 754.9 571.2 756.7 575.6C758.5 580.0 759.8 582.2 764.4 584.4C769.0 586.6 773.6 588.0 784.4 588.9C795.1 589.8 801.3 589.6 828.9 589.8C856.5 590.0 929.8 590.1 950.0 590.2"/>
<path d="M949.8 189.5C944.5 190.4 930.5 192.8 917.8 195.1C905.0 197.4 888.1 199.7 873.3 203.3C858.5 206.9 841.5 211.7 828.9 216.7C816.3 221.7 806.3 227.2 797.8 233.3C789.3 239.4 783.4 246.2 777.8 253.3C772.2 260.4 767.5 267.5 764.4 275.6C761.2 283.8 760.1 292.2 758.9 302.2C757.7 312.2 757.5 324.5 757.3 335.6C757.1 346.7 757.5 358.2 757.8 368.9C758.1 379.6 758.8 387.0 758.9 400.0C759.0 413.0 758.4 427.8 758.2 446.7C758.0 465.6 757.6 495.5 757.8 513.3C758.0 531.1 758.3 543.7 759.6 553.3C760.9 562.9 762.2 566.5 765.6 571.1C769.0 575.7 773.1 578.5 780.0 581.1C786.9 583.7 794.9 585.3 806.7 586.7C818.6 588.1 827.2 588.7 851.1 589.3C875.0 589.9 933.5 590.1 950.0 590.2"/>
<path d="M949.8 189.5C944.5 190.6 930.5 193.3 917.8 196.0C905.0 198.7 888.1 201.6 873.3 205.6C858.5 209.6 841.1 214.6 828.9 220.0C816.7 225.4 808.1 231.1 800.0 237.8C791.9 244.5 785.2 253.0 780.0 260.0C774.8 267.0 771.7 272.6 768.9 280.0C766.1 287.4 764.6 295.1 763.3 304.4C762.0 313.7 761.4 324.9 761.1 335.6C760.9 346.4 761.5 358.2 761.8 368.9C762.1 379.6 762.6 390.8 762.7 400.0C762.8 409.2 762.5 412.9 762.2 424.4C761.9 435.9 761.2 454.1 761.1 468.9C761.0 483.7 761.0 500.3 761.8 513.3C762.5 526.3 763.3 537.8 765.6 546.7C767.9 555.6 770.6 561.5 775.6 566.7C780.6 571.9 786.7 574.9 795.6 577.8C804.5 580.7 816.0 582.5 828.9 584.0C841.8 585.5 858.5 585.9 873.3 586.7C888.1 587.5 905.0 588.3 917.8 588.9C930.6 589.5 944.6 590.0 950.0 590.2"/>
<path d="M949.8 189.5C944.5 191.1 928.7 195.7 917.8 198.9C906.9 202.1 895.5 205.0 884.4 208.9C873.3 212.8 861.1 217.0 851.1 222.2C841.1 227.4 832.2 233.3 824.4 240.0C816.6 246.7 809.9 254.4 804.4 262.2C798.9 270.0 794.6 278.2 791.1 286.7C787.6 295.2 785.3 303.3 783.3 313.3C781.3 323.3 780.0 335.6 778.9 346.7C777.8 357.8 777.2 371.1 776.7 380.0C776.2 388.9 776.5 392.6 776.2 400.0C775.9 407.4 775.4 414.8 775.1 424.4C774.8 434.0 774.1 447.4 774.4 457.8C774.7 468.2 775.2 477.4 776.7 486.7C778.2 495.9 780.1 505.1 783.3 513.3C786.4 521.4 790.2 528.5 795.6 535.6C801.0 542.7 808.2 550.1 815.6 555.6C823.0 561.1 830.4 565.2 840.0 568.9C849.6 572.6 862.2 575.4 873.3 577.8C884.4 580.2 896.7 581.6 906.7 583.3C916.7 585.0 926.1 586.6 933.3 587.8C940.5 588.9 947.2 589.8 950.0 590.2"/>
<path d="M949.8 189.5C944.5 191.3 928.7 196.6 917.8 200.4C906.9 204.2 895.5 207.6 884.4 212.2C873.3 216.8 860.4 222.4 851.1 227.8C841.9 233.2 835.9 237.9 828.9 244.4C821.9 250.9 814.4 258.9 808.9 266.7C803.4 274.5 799.1 282.6 795.6 291.1C792.1 299.6 789.8 308.5 787.8 317.8C785.8 327.1 784.4 336.3 783.3 346.7C782.2 357.1 781.6 371.1 781.1 380.0C780.6 388.9 780.6 392.6 780.4 400.0C780.1 407.4 779.7 414.8 779.6 424.4C779.5 434.0 779.2 447.4 779.6 457.8C780.0 468.2 780.6 477.4 782.2 486.7C783.8 495.9 786.0 505.1 789.3 513.3C792.6 521.4 797.1 529.1 802.2 535.6C807.3 542.1 813.0 547.2 820.0 552.2C827.0 557.2 835.5 561.9 844.4 565.6C853.3 569.3 862.9 571.8 873.3 574.4C883.7 577.0 896.7 579.0 906.7 581.1C916.7 583.2 926.1 585.2 933.3 586.7C940.5 588.2 947.2 589.6 950.0 590.2"/>
<path d="M949.8 189.5C944.5 191.6 928.7 197.8 917.8 202.2C906.9 206.5 894.8 210.6 884.4 215.6C874.0 220.6 864.1 226.6 855.6 232.2C847.1 237.8 840.0 242.8 833.3 248.9C826.6 255.0 820.8 261.9 815.6 268.9C810.4 275.9 805.9 283.0 802.2 291.1C798.5 299.2 795.7 308.5 793.3 317.8C790.9 327.1 789.1 336.3 787.8 346.7C786.5 357.1 786.1 368.9 785.6 380.0C785.1 391.1 784.9 402.2 784.9 413.3C784.9 424.4 784.9 436.3 785.6 446.7C786.3 457.1 787.0 466.0 788.9 475.6C790.8 485.2 793.4 495.9 796.7 504.4C800.0 512.9 803.9 520.0 808.9 526.7C813.9 533.4 819.7 538.9 826.7 544.4C833.7 549.9 841.5 555.4 851.1 560.0C860.7 564.6 874.0 568.9 884.4 572.2C894.8 575.5 904.8 577.8 913.3 580.0C921.8 582.2 929.5 583.9 935.6 585.6C941.7 587.3 947.6 589.4 950.0 590.2"/>
<path d="M880.3 388.5C879.6 388.2 877.5 387.2 876.0 386.8C874.5 386.4 872.8 386.1 871.1 386.2C869.4 386.3 867.7 386.7 866.0 387.3C864.3 387.9 862.7 388.6 861.1 390.0C859.5 391.4 857.8 393.5 856.5 395.5C855.2 397.5 854.4 397.4 853.3 402.2C852.2 407.0 850.4 416.2 850.0 424.4C849.6 432.5 849.8 441.5 851.1 451.1C852.4 460.7 854.5 472.2 857.8 482.2C861.1 492.2 865.5 501.5 871.1 511.1C876.7 520.7 884.8 532.2 891.1 540.0C897.4 547.8 903.4 552.6 908.9 557.8C914.4 563.0 919.6 567.6 924.4 571.1C929.2 574.6 934.1 576.1 937.8 578.8C941.5 581.4 944.7 585.1 946.7 587.0C948.7 588.9 949.5 589.7 950.0 590.2"/>
<path d="M949.8 189.5C949.7 192.1 949.3 199.2 949.0 205.0C948.7 210.8 948.6 216.3 947.8 224.4C947.0 232.5 945.5 244.8 944.4 253.3C943.3 261.8 942.5 269.3 941.1 275.6C939.7 281.9 936.5 284.8 936.0 291.1C935.5 297.4 937.7 306.6 937.8 313.3C937.9 320.0 936.3 326.3 936.7 331.1C937.1 335.9 938.0 338.1 940.0 342.2C942.0 346.3 946.7 351.9 948.9 355.6C951.1 359.3 952.6 362.9 953.3 364.4"/>
<path d="M948.9 389.3C949.1 390.4 949.3 393.5 950.0 395.6C950.7 397.8 952.6 397.4 953.3 402.2C954.0 407.0 954.6 415.1 954.4 424.4C954.2 433.7 952.8 446.7 952.2 457.8C951.6 468.9 951.0 477.4 950.7 491.1C950.4 504.8 950.3 523.5 950.2 540.0C950.1 556.5 950.0 581.8 950.0 590.2"/>
<path d="M949.8 189.5C958.2 189.6 979.4 190.1 1000.0 190.2C1020.6 190.3 1054.5 190.1 1073.3 190.2C1092.1 190.3 1103.1 190.0 1112.7 190.6C1122.3 191.2 1126.2 192.2 1130.9 193.9C1135.6 195.6 1137.4 198.1 1140.6 200.6C1143.8 203.1 1148.7 207.7 1150.3 209.1"/>
<path d="M949.8 189.5C951.9 189.8 952.7 190.4 962.2 191.6C971.7 192.8 991.9 194.6 1006.7 196.7C1021.5 198.8 1038.1 202.1 1051.1 204.4C1064.0 206.7 1075.1 208.5 1084.4 210.7C1093.7 212.9 1100.9 214.8 1106.7 217.4C1112.5 220.0 1116.0 222.7 1119.5 226.0C1123.0 229.3 1125.8 233.0 1128.0 237.0C1130.2 241.0 1131.4 245.2 1132.6 250.0C1133.8 254.8 1134.5 259.1 1135.4 266.0C1136.3 272.9 1136.8 277.7 1137.8 291.1C1138.8 304.6 1140.2 328.6 1141.1 346.7C1142.0 364.8 1142.5 387.1 1143.3 400.0C1144.0 412.9 1144.8 414.4 1145.6 424.0C1146.3 433.6 1147.2 444.8 1147.8 457.8C1148.3 470.8 1148.5 490.0 1148.9 502.2C1149.4 514.4 1150.2 526.2 1150.5 531.0"/>
<path d="M949.8 189.5C952.6 190.2 961.0 192.5 966.6 193.7C972.3 194.9 978.0 195.5 983.7 196.6C989.4 197.7 995.1 198.8 1000.7 200.1C1006.3 201.4 1011.9 203.1 1017.4 204.6C1023.0 206.1 1028.6 207.7 1034.2 209.2C1039.8 210.7 1045.4 212.1 1050.9 213.6C1056.5 215.1 1062.1 216.6 1067.7 218.2C1073.2 219.8 1078.9 221.1 1084.3 223.1C1089.7 225.0 1095.2 227.2 1100.1 230.1C1105.0 233.1 1110.2 236.4 1113.9 240.6C1117.7 244.8 1120.3 250.2 1122.6 255.5C1125.0 260.7 1126.6 266.3 1128.0 271.9C1129.4 277.5 1130.3 283.3 1131.1 289.0C1131.8 294.7 1132.1 300.5 1132.5 306.3C1133.0 312.0 1133.5 317.8 1133.9 323.6C1134.4 329.3 1134.8 335.1 1135.2 340.9C1135.6 346.6 1136.0 352.4 1136.4 358.2C1136.8 363.9 1137.2 369.7 1137.5 375.5C1137.9 381.3 1138.2 387.0 1138.5 392.8C1138.8 398.6 1139.1 404.4 1139.3 410.1C1139.6 415.9 1139.7 421.7 1139.9 427.5C1140.1 433.2 1140.2 439.0 1140.4 444.8C1140.5 450.6 1140.6 456.4 1140.7 462.2C1140.8 467.9 1140.9 473.7 1141.0 479.5C1141.0 485.3 1141.1 491.1 1141.2 496.8C1141.3 502.6 1141.6 508.4 1141.7 514.2C1141.8 520.0 1142.1 525.8 1141.9 531.5C1141.7 537.3 1141.9 543.3 1140.6 548.8C1139.3 554.3 1137.2 560.1 1134.1 564.8C1131.0 569.5 1126.9 574.1 1122.2 577.1C1117.4 580.1 1111.5 581.5 1105.9 582.7C1100.3 584.0 1094.4 584.2 1088.6 584.7C1082.9 585.2 1077.1 585.4 1071.3 585.7C1065.6 585.9 1059.8 586.2 1054.0 586.4C1048.2 586.6 1042.4 586.8 1036.7 587.0C1030.9 587.1 1025.1 587.2 1019.3 587.4C1013.5 587.5 1007.8 587.6 1002.0 587.7C996.2 587.9 990.4 588.0 984.6 588.2C978.9 588.4 973.1 588.7 967.3 589.0C961.5 589.4 952.9 590.0 950.0 590.2"/>
<path d="M949.8 189.5C952.5 190.3 960.7 192.7 966.3 194.0C971.8 195.3 977.5 196.0 983.1 197.1C988.7 198.2 994.3 199.4 999.8 200.8C1005.3 202.2 1010.8 203.8 1016.3 205.4C1021.7 206.9 1027.2 208.6 1032.7 210.1C1038.2 211.6 1043.7 213.1 1049.2 214.7C1054.7 216.2 1060.2 217.7 1065.6 219.4C1071.1 221.0 1076.7 222.4 1082.0 224.4C1087.3 226.4 1092.6 228.6 1097.5 231.5C1102.3 234.4 1107.4 237.7 1111.1 241.8C1114.9 245.9 1117.7 251.1 1120.1 256.2C1122.6 261.3 1124.3 266.8 1125.8 272.3C1127.3 277.8 1128.3 283.4 1129.1 289.1C1130.0 294.7 1130.4 300.4 1130.9 306.1C1131.4 311.7 1131.9 317.4 1132.4 323.1C1132.9 328.8 1133.3 334.5 1133.7 340.2C1134.1 345.8 1134.5 351.5 1134.8 357.2C1135.2 362.9 1135.6 368.6 1135.9 374.3C1136.2 380.0 1136.5 385.7 1136.8 391.4C1137.0 397.1 1137.3 402.8 1137.5 408.5C1137.7 414.2 1137.8 419.9 1138.0 425.6C1138.1 431.3 1138.3 437.0 1138.4 442.7C1138.5 448.4 1138.6 454.1 1138.7 459.8C1138.8 465.5 1138.8 471.2 1138.8 476.9C1138.9 482.6 1138.9 488.3 1139.0 494.0C1139.1 499.7 1139.3 505.4 1139.4 511.1C1139.4 516.8 1139.6 522.5 1139.3 528.2C1139.0 533.9 1139.0 539.8 1137.6 545.2C1136.2 550.7 1134.1 556.3 1131.0 560.9C1127.9 565.5 1123.7 569.9 1119.1 572.9C1114.4 576.0 1108.7 577.5 1103.2 579.0C1097.8 580.4 1092.1 581.0 1086.4 581.7C1080.8 582.4 1075.1 582.9 1069.5 583.3C1063.8 583.8 1058.1 584.2 1052.4 584.5C1046.7 584.9 1041.0 585.2 1035.4 585.5C1029.7 585.8 1024.0 586.1 1018.3 586.3C1012.6 586.6 1006.9 586.8 1001.2 587.0C995.5 587.3 989.8 587.5 984.1 587.8C978.4 588.1 972.7 588.5 967.1 588.9C961.4 589.3 952.8 590.0 950.0 590.2"/>
<path d="M949.8 189.5C952.5 190.3 960.5 192.9 965.9 194.3C971.4 195.7 977.0 196.5 982.5 197.6C987.9 198.8 993.4 200.0 998.9 201.5C1004.3 202.9 1009.7 204.6 1015.1 206.2C1020.5 207.8 1025.8 209.4 1031.2 211.0C1036.6 212.6 1042.0 214.1 1047.4 215.7C1052.8 217.3 1058.2 218.8 1063.6 220.5C1069.0 222.2 1074.4 223.7 1079.6 225.8C1084.8 227.8 1090.1 230.0 1094.9 232.9C1099.6 235.8 1104.5 239.0 1108.3 243.0C1112.1 247.0 1115.1 252.0 1117.6 257.0C1120.2 261.9 1122.0 267.3 1123.6 272.7C1125.2 278.1 1126.2 283.6 1127.2 289.1C1128.1 294.6 1128.6 300.3 1129.3 305.8C1129.9 311.4 1130.4 317.0 1130.9 322.6C1131.4 328.2 1131.8 333.8 1132.2 339.5C1132.6 345.1 1132.9 350.7 1133.3 356.3C1133.6 361.9 1134.0 367.5 1134.3 373.1C1134.6 378.8 1134.8 384.4 1135.0 390.0C1135.3 395.6 1135.4 401.2 1135.6 406.9C1135.8 412.5 1135.9 418.1 1136.1 423.7C1136.2 429.3 1136.3 435.0 1136.4 440.6C1136.5 446.2 1136.6 451.8 1136.6 457.5C1136.7 463.1 1136.7 468.7 1136.7 474.3C1136.8 480.0 1136.8 485.6 1136.8 491.2C1136.8 496.8 1137.0 502.5 1137.0 508.1C1137.0 513.7 1137.0 519.3 1136.6 524.9C1136.2 530.5 1136.1 536.3 1134.6 541.6C1133.2 547.0 1131.0 552.5 1127.9 557.0C1124.8 561.5 1120.6 565.7 1116.0 568.8C1111.5 571.8 1105.9 573.6 1100.6 575.2C1095.3 576.9 1089.7 577.8 1084.2 578.7C1078.7 579.7 1073.1 580.3 1067.6 581.0C1062.0 581.6 1056.4 582.1 1050.8 582.7C1045.2 583.2 1039.7 583.7 1034.1 584.1C1028.5 584.5 1022.9 584.9 1017.3 585.3C1011.7 585.7 1006.0 586.0 1000.4 586.4C994.8 586.7 989.2 587.0 983.6 587.4C978.0 587.8 972.4 588.3 966.8 588.7C961.2 589.2 952.8 590.0 950.0 590.2"/>
<path d="M949.8 189.5C952.4 190.3 960.3 193.1 965.6 194.6C970.9 196.0 976.4 196.9 981.8 198.2C987.2 199.4 992.6 200.7 998.0 202.1C1003.3 203.6 1008.6 205.3 1013.9 206.9C1019.2 208.6 1024.5 210.3 1029.8 211.9C1035.1 213.5 1040.4 215.1 1045.7 216.7C1051.0 218.3 1056.3 219.9 1061.6 221.6C1066.8 223.4 1072.2 225.0 1077.3 227.1C1082.4 229.2 1087.5 231.5 1092.2 234.3C1096.9 237.2 1101.7 240.3 1105.6 244.2C1109.4 248.1 1112.5 252.9 1115.1 257.7C1117.8 262.5 1119.7 267.8 1121.4 273.1C1123.1 278.3 1124.2 283.8 1125.2 289.2C1126.3 294.6 1126.9 300.1 1127.6 305.6C1128.3 311.1 1128.9 316.6 1129.4 322.2C1129.9 327.7 1130.2 333.2 1130.6 338.7C1131.0 344.3 1131.4 349.8 1131.7 355.3C1132.1 360.9 1132.4 366.4 1132.6 372.0C1132.9 377.5 1133.1 383.0 1133.3 388.6C1133.5 394.1 1133.6 399.7 1133.8 405.2C1133.9 410.8 1134.0 416.3 1134.1 421.8C1134.2 427.4 1134.3 432.9 1134.4 438.5C1134.5 444.0 1134.6 449.6 1134.6 455.1C1134.6 460.7 1134.6 466.2 1134.6 471.8C1134.6 477.3 1134.6 482.8 1134.6 488.4C1134.6 493.9 1134.7 499.5 1134.6 505.0C1134.5 510.6 1134.4 516.1 1133.9 521.6C1133.4 527.1 1133.1 532.8 1131.6 538.1C1130.1 543.3 1128.0 548.7 1124.9 553.1C1121.7 557.6 1117.4 561.5 1112.9 564.6C1108.5 567.6 1103.1 569.6 1098.0 571.5C1092.8 573.4 1087.4 574.6 1082.0 575.7C1076.6 576.9 1071.2 577.8 1065.7 578.6C1060.2 579.5 1054.7 580.1 1049.3 580.8C1043.8 581.5 1038.3 582.1 1032.8 582.7C1027.3 583.2 1021.7 583.8 1016.2 584.3C1010.7 584.8 1005.2 585.2 999.7 585.7C994.2 586.1 988.6 586.6 983.1 587.1C977.6 587.5 972.1 588.1 966.6 588.6C961.0 589.1 952.8 589.9 950.0 590.2"/>
<path d="M949.8 189.5C952.4 190.4 960.0 193.4 965.2 194.9C970.5 196.4 975.9 197.4 981.2 198.7C986.5 200.0 991.8 201.3 997.1 202.8C1002.3 204.3 1007.5 206.0 1012.7 207.7C1017.9 209.4 1023.1 211.1 1028.3 212.8C1033.5 214.5 1038.7 216.1 1043.9 217.7C1049.1 219.4 1054.4 221.0 1059.5 222.8C1064.7 224.5 1069.9 226.3 1074.9 228.5C1079.9 230.6 1085.0 232.9 1089.6 235.7C1094.2 238.5 1098.9 241.7 1102.8 245.5C1106.6 249.2 1109.9 253.8 1112.6 258.4C1115.3 263.1 1117.4 268.3 1119.2 273.4C1120.9 278.6 1122.2 283.9 1123.3 289.2C1124.4 294.6 1125.2 300.0 1126.0 305.4C1126.7 310.8 1127.3 316.2 1127.8 321.7C1128.4 327.1 1128.7 332.6 1129.1 338.0C1129.5 343.5 1129.9 348.9 1130.2 354.4C1130.5 359.9 1130.8 365.3 1131.0 370.8C1131.2 376.2 1131.4 381.7 1131.5 387.2C1131.7 392.6 1131.8 398.1 1131.9 403.6C1132.0 409.0 1132.1 414.5 1132.2 420.0C1132.3 425.4 1132.4 430.9 1132.4 436.4C1132.5 441.8 1132.5 447.3 1132.5 452.8C1132.6 458.2 1132.5 463.7 1132.5 469.2C1132.5 474.6 1132.4 480.1 1132.4 485.6C1132.3 491.0 1132.4 496.5 1132.3 502.0C1132.1 507.4 1131.9 512.9 1131.3 518.3C1130.7 523.7 1130.2 529.3 1128.6 534.5C1127.0 539.6 1124.9 544.9 1121.8 549.3C1118.6 553.6 1114.3 557.3 1109.9 560.4C1105.5 563.5 1100.3 565.7 1095.3 567.8C1090.3 569.8 1085.0 571.3 1079.8 572.8C1074.5 574.2 1069.2 575.3 1063.8 576.3C1058.5 577.3 1053.1 578.1 1047.7 578.9C1042.3 579.8 1036.9 580.5 1031.5 581.2C1026.0 581.9 1020.6 582.6 1015.2 583.2C1009.8 583.9 1004.3 584.4 998.9 585.0C993.5 585.5 988.0 586.1 982.6 586.7C977.2 587.2 971.7 587.8 966.3 588.4C960.9 589.0 952.7 589.9 950.0 590.2"/>
<path d="M949.8 189.5C952.3 190.4 959.8 193.6 964.9 195.2C970.0 196.8 975.4 197.8 980.6 199.2C985.8 200.6 991.0 201.9 996.2 203.5C1001.3 205.0 1006.4 206.8 1011.5 208.5C1016.6 210.2 1021.7 212.0 1026.8 213.7C1031.9 215.4 1037.1 217.1 1042.2 218.7C1047.3 220.4 1052.5 222.0 1057.5 223.9C1062.6 225.7 1067.7 227.6 1072.6 229.8C1077.5 232.0 1082.4 234.3 1087.0 237.1C1091.5 239.9 1096.1 243.0 1100.0 246.7C1103.8 250.4 1107.3 254.6 1110.1 259.2C1112.9 263.7 1115.1 268.8 1116.9 273.8C1118.8 278.8 1120.1 284.1 1121.4 289.3C1122.6 294.5 1123.5 299.9 1124.3 305.2C1125.2 310.5 1125.8 315.8 1126.3 321.2C1126.9 326.6 1127.2 331.9 1127.6 337.3C1128.0 342.7 1128.4 348.1 1128.7 353.5C1129.0 358.8 1129.2 364.2 1129.4 369.6C1129.6 375.0 1129.7 380.4 1129.8 385.8C1129.9 391.2 1129.9 396.5 1130.0 401.9C1130.1 407.3 1130.2 412.7 1130.3 418.1C1130.3 423.5 1130.4 428.9 1130.4 434.3C1130.5 439.7 1130.5 445.0 1130.5 450.4C1130.5 455.8 1130.5 461.2 1130.4 466.6C1130.4 472.0 1130.3 477.4 1130.2 482.8C1130.1 488.2 1130.1 493.6 1129.9 498.9C1129.6 504.3 1129.3 509.7 1128.6 515.0C1127.9 520.4 1127.3 525.8 1125.6 530.9C1124.0 536.0 1121.8 541.1 1118.7 545.4C1115.5 549.6 1111.1 553.1 1106.8 556.2C1102.5 559.3 1097.5 561.8 1092.7 564.0C1087.8 566.3 1082.7 568.1 1077.6 569.8C1072.5 571.4 1067.2 572.7 1062.0 574.0C1056.7 575.2 1051.4 576.1 1046.1 577.1C1040.8 578.0 1035.5 578.9 1030.2 579.8C1024.8 580.6 1019.5 581.5 1014.2 582.2C1008.8 583.0 1003.5 583.6 998.1 584.3C992.8 585.0 987.4 585.6 982.1 586.3C976.7 587.0 971.4 587.6 966.1 588.3C960.7 588.9 952.7 589.9 950.0 590.2"/>
<path d="M949.8 189.5C951.9 190.5 956.4 193.1 962.2 195.6C968.0 198.1 977.0 201.4 984.4 204.4C991.8 207.4 999.3 210.2 1006.7 213.3C1014.1 216.5 1021.5 220.0 1028.9 223.3C1036.3 226.6 1043.7 229.4 1051.1 233.3C1058.5 237.2 1066.3 241.5 1073.3 246.7C1080.3 251.9 1087.7 258.1 1093.3 264.4C1098.9 270.7 1103.0 277.0 1106.7 284.4C1110.4 291.8 1113.4 300.4 1115.6 308.9C1117.8 317.4 1118.7 325.6 1120.0 335.6C1121.3 345.6 1122.6 358.2 1123.3 368.9C1124.0 379.6 1124.2 390.8 1124.4 400.0C1124.6 409.2 1124.6 412.9 1124.4 424.4C1124.2 435.9 1124.4 455.9 1123.3 468.9C1122.2 481.9 1120.9 491.8 1117.8 502.2C1114.7 512.6 1110.3 523.0 1104.4 531.1C1098.5 539.2 1091.1 545.2 1082.2 551.1C1073.3 557.0 1061.8 562.4 1051.1 566.7C1040.4 571.0 1028.9 573.8 1017.8 576.7C1006.7 579.6 995.7 581.8 984.4 584.0C973.1 586.2 955.7 589.2 950.0 590.2"/>
<path d="M949.8 189.5C951.9 190.7 956.4 193.6 962.2 196.7C968.0 199.8 977.0 203.9 984.4 207.8C991.8 211.7 999.3 215.9 1006.7 220.0C1014.1 224.1 1021.5 227.8 1028.9 232.2C1036.3 236.6 1043.7 240.9 1051.1 246.7C1058.5 252.4 1067.0 260.0 1073.3 266.7C1079.6 273.4 1084.5 279.7 1088.9 286.7C1093.4 293.7 1097.0 301.5 1100.0 308.9C1103.0 316.3 1104.9 323.0 1106.7 331.1C1108.5 339.2 1109.9 349.7 1111.0 357.8C1112.1 365.9 1112.7 368.9 1113.5 380.0C1114.3 391.1 1115.4 409.6 1115.6 424.4C1115.8 439.2 1115.9 455.9 1114.4 468.9C1112.9 481.9 1110.6 492.2 1106.7 502.2C1102.8 512.2 1097.4 521.1 1091.1 528.9C1084.8 536.7 1077.4 543.0 1068.9 548.9C1060.4 554.8 1050.4 559.9 1040.0 564.4C1029.6 568.9 1017.8 572.3 1006.7 575.6C995.6 578.9 982.8 581.9 973.3 584.3C963.8 586.7 953.9 589.2 950.0 590.2"/>
<path d="M949.8 189.5C951.9 191.1 956.4 194.9 962.2 198.9C968.0 202.9 977.0 208.5 984.4 213.3C991.8 218.1 999.3 222.6 1006.7 227.8C1014.1 233.0 1021.5 238.3 1028.9 244.4C1036.3 250.5 1044.4 257.3 1051.1 264.4C1057.8 271.4 1063.7 279.3 1068.9 286.7C1074.1 294.1 1078.5 301.5 1082.2 308.9C1085.9 316.3 1088.5 323.0 1091.1 331.1C1093.7 339.2 1095.9 349.7 1097.8 357.8C1099.7 365.9 1101.0 373.0 1102.2 380.0C1103.4 387.0 1104.2 392.6 1104.9 400.0C1105.7 407.4 1106.4 413.7 1106.7 424.4C1107.0 435.1 1107.8 452.5 1106.7 464.4C1105.6 476.3 1103.7 486.0 1100.0 495.6C1096.3 505.2 1090.7 514.1 1084.4 522.2C1078.1 530.3 1070.7 537.7 1062.2 544.4C1053.7 551.1 1043.3 557.2 1033.3 562.2C1023.3 567.2 1012.2 570.9 1002.2 574.4C992.2 577.9 982.0 580.6 973.3 583.2C964.6 585.8 953.9 589.0 950.0 590.2"/>
<path d="M949.8 189.5C951.0 190.6 954.9 193.9 957.0 196.0C959.1 198.1 960.7 200.0 962.2 202.2C963.7 204.4 964.5 207.1 966.0 209.0C967.5 210.9 968.0 211.2 971.1 213.8C974.2 216.4 978.5 219.3 984.4 224.4C990.3 229.5 999.3 237.0 1006.7 244.4C1014.1 251.8 1022.2 261.1 1028.9 268.9C1035.6 276.7 1041.2 283.7 1046.7 291.1C1052.2 298.5 1057.8 305.9 1062.2 313.3C1066.6 320.7 1070.0 328.2 1073.3 335.6C1076.6 343.0 1079.8 350.4 1082.2 357.8C1084.6 365.2 1086.1 373.0 1087.8 380.0C1089.5 387.0 1091.1 394.4 1092.2 400.0C1093.3 405.6 1093.5 405.5 1094.4 413.3C1095.3 421.1 1097.6 436.7 1097.8 446.7C1098.0 456.7 1097.3 464.4 1095.6 473.3C1093.9 482.2 1091.5 491.5 1087.8 500.0C1084.1 508.5 1079.4 516.6 1073.3 524.4C1067.2 532.2 1059.2 540.4 1051.1 546.7C1042.9 553.0 1033.7 557.8 1024.4 562.2C1015.2 566.6 1004.9 569.9 995.6 573.3C986.4 576.7 976.5 579.7 968.9 582.5C961.3 585.3 953.1 588.9 950.0 590.2"/>
<path d="M1018.6 392.6C1019.2 393.5 1020.3 394.6 1022.0 398.0C1023.7 401.4 1026.5 407.0 1028.9 413.3C1031.4 419.6 1035.0 428.2 1036.7 435.6C1038.4 443.0 1039.5 450.4 1039.3 457.8C1039.1 465.2 1037.7 472.6 1035.6 480.0C1033.5 487.4 1030.4 494.8 1026.7 502.2C1023.0 509.6 1018.5 517.0 1013.3 524.4C1008.1 531.8 1001.9 540.0 995.6 546.7C989.3 553.4 981.5 559.2 975.6 564.4C969.7 569.6 963.9 574.3 960.0 577.8C956.1 581.3 954.2 583.4 952.5 585.5C950.8 587.6 950.4 589.4 950.0 590.2"/>
<circle cx="883.3" cy="390" r="3.300"/><circle cx="1016.7" cy="390" r="3.300"/>
</g></g>
<rect x="749.500" y="189.500" width="401" height="401" fill="none" stroke="#1a0c00" stroke-width="1"/>
<rect x="710.200" y="141" width="479.800" height="498" fill="none" stroke="#777" stroke-width="1.800"/>
<path d="M715.7 141.500v3.300M715.7 638.500v-3.300M711 624.5h3.300M1189.500 624.5h-3.300M749.2 141.500v3.300M749.2 638.500v-3.300M711 591.0h3.300M1189.500 591.0h-3.300M782.7 141.500v3.300M782.7 638.500v-3.300M711 557.5h3.300M1189.500 557.5h-3.300M816.2 141.500v3.300M816.2 638.500v-3.300M711 524.0h3.300M1189.500 524.0h-3.300M849.7 141.500v3.300M849.7 638.500v-3.300M711 490.5h3.300M1189.500 490.5h-3.300M883.2 141.500v3.300M883.2 638.500v-3.300M711 457.0h3.300M1189.500 457.0h-3.300M916.7 141.500v3.300M916.7 638.500v-3.300M711 423.5h3.300M1189.500 423.5h-3.300M950.2 141.500v3.300M950.2 638.500v-3.300M711 390.0h3.300M1189.500 390.0h-3.300M983.7 141.500v3.300M983.7 638.500v-3.300M711 356.5h3.300M1189.500 356.5h-3.300M1017.2 141.500v3.300M1017.2 638.500v-3.300M711 323.0h3.300M1189.500 323.0h-3.300M1050.7 141.500v3.300M1050.7 638.500v-3.300M711 289.5h3.300M1189.500 289.5h-3.300M1084.2 141.500v3.300M1084.2 638.500v-3.300M711 256.0h3.300M1189.500 256.0h-3.300M1117.7 141.500v3.300M1117.7 638.500v-3.300M711 222.5h3.300M1189.500 222.5h-3.300M1151.2 141.500v3.300M1151.2 638.500v-3.300M711 189.0h3.300M1189.500 189.0h-3.300M1184.7 141.500v3.300M1184.7 638.500v-3.300M711 155.5h3.300M1189.500 155.5h-3.300" stroke="#222" stroke-width="1.100" fill="none"/>
<g font-family="'DejaVu Sans Condensed','DejaVu Sans','Liberation Sans',sans-serif" font-weight="bold" font-size="9.400" fill="#222">
<text x="706" y="627.9" text-anchor="end">-35</text><text x="716.2" y="650.700" text-anchor="middle">-35</text>
<text x="706" y="594.4" text-anchor="end">-30</text><text x="749.7" y="650.700" text-anchor="middle">-30</text>
<text x="706" y="560.9" text-anchor="end">-25</text><text x="783.2" y="650.700" text-anchor="middle">-25</text>
<text x="706" y="527.4" text-anchor="end">-20</text><text x="816.7" y="650.700" text-anchor="middle">-20</text>
<text x="706" y="493.9" text-anchor="end">-15</text><text x="850.2" y="650.700" text-anchor="middle">-15</text>
<text x="706" y="460.4" text-anchor="end">-10</text><text x="883.7" y="650.700" text-anchor="middle">-10</text>
<text x="706" y="426.9" text-anchor="end">-5</text><text x="917.2" y="650.700" text-anchor="middle">-5</text>
<text x="706" y="393.4" text-anchor="end">0</text><text x="949.8" y="650.700" text-anchor="middle">0</text>
<text x="706" y="359.9" text-anchor="end">5</text><text x="983.3" y="650.700" text-anchor="middle">5</text>
<text x="706" y="326.4" text-anchor="end">10</text><text x="1016.8" y="650.700" text-anchor="middle">10</text>
<text x="706" y="292.9" text-anchor="end">15</text><text x="1050.3" y="650.700" text-anchor="middle">15</text>
<text x="706" y="259.4" text-anchor="end">20</text><text x="1083.8" y="650.700" text-anchor="middle">20</text>
<text x="706" y="225.9" text-anchor="end">25</text><text x="1117.3" y="650.700" text-anchor="middle">25</text>
<text x="706" y="192.4" text-anchor="end">30</text><text x="1150.8" y="650.700" text-anchor="middle">30</text>
<text x="706" y="158.9" text-anchor="end">35</text><text x="1184.3" y="650.700" text-anchor="middle">35</text>
</g>
<text x="791" y="120" font-family="'DejaVu Sans','Liberation Sans',sans-serif" font-size="9.600" fill="#111" textLength="146" lengthAdjust="spacing">Surface: Electric potential (V)</text>
<text x="943.500" y="120" font-family="'DejaVu Sans','Liberation Sans',sans-serif" font-size="9.600" fill="#111" textLength="121.500" lengthAdjust="spacing">Streamline: Electric field</text>
<rect x="1210" y="170" width="12" height="465" fill="url(#gJet)"/>
<g font-family="'DejaVu Sans','Liberation Sans',sans-serif" font-size="9.600" fill="#111">
<path d="M1200.500 148.500h9l-4.500 -8z M1200.500 645.500h9l-4.500 8z" fill="#111"/>
<text x="1212.500" y="147.800" textLength="46" lengthAdjust="spacing">4.371× 10</text><text x="1259.500" y="144.500" font-size="9.600">26</text>
<text x="1222.500" y="162.800" textLength="18.500" lengthAdjust="spacingAndGlyphs">× 10</text><text x="1242.500" y="158.800" font-size="9.600">26</text>
<text x="1212.500" y="652.800" textLength="46" lengthAdjust="spacing">4.371× 10</text><text x="1259.500" y="649.500">26</text>
<text x="1227" y="174" font-weight="bold" font-family="'DejaVu Sans Condensed','DejaVu Sans',sans-serif" font-size="9.400">4.371</text>
<text x="1227" y="638" font-weight="bold" font-family="'DejaVu Sans Condensed','DejaVu Sans',sans-serif" font-size="9.400">4.371</text>
</g>
<g font-family="'Liberation Sans','DejaVu Sans',sans-serif" fill="#d2e3ee" font-size="7.500"><text x="1216" y="124" textLength="37" lengthAdjust="spacingAndGlyphs">COMSOL</text><text x="1189" y="131.500" textLength="64" lengthAdjust="spacingAndGlyphs">MULTIPHYSICS</text></g>
<path d="M1258 120 L1267 117.500 L1273 120 L1271 129 L1263 131.500 L1259 128Z" fill="#a8d0e8"/><path d="M1262 122 L1268 121 L1269 126 L1264 127.500Z" fill="#6ab0dc"/>
</svg>
<svg class="abs" style="left:0;top:0" width="1308" height="990" viewBox="0 0 1308 990">
<defs>
<linearGradient id="gMag" x1=".7" y1="0" x2=".2" y2="1"><stop offset="0" stop-color="#ff00e8"/><stop offset=".45" stop-color="#d808f0"/><stop offset="1" stop-color="#3a10e8"/></linearGradient>
<linearGradient id="gMnt" x1="0" y1="0" x2="0" y2="1"><stop offset="0" stop-color="#ff10d8"/><stop offset=".5" stop-color="#b060e8"/><stop offset="1" stop-color="#2a50d8"/></linearGradient>
<linearGradient id="gBtn" x1="0" y1="0" x2="0" y2="1"><stop offset="0" stop-color="#fdfeff"/><stop offset="1" stop-color="#d4e6ee"/></linearGradient>
<linearGradient id="gStr" x1="0" y1="0" x2="1" y2="0"><stop offset="0" stop-color="#5a78e8"/><stop offset=".35" stop-color="#a050d8"/><stop offset="1" stop-color="#e838c0"/></linearGradient>
<linearGradient id="gCone" x1="0" y1="0" x2="1" y2="0"><stop offset="0" stop-color="#9a60b0"/><stop offset=".5" stop-color="#d090e0"/><stop offset="1" stop-color="#a870c0"/></linearGradient><radialGradient id="gSph" cx=".4" cy=".35" r=".7"><stop offset="0" stop-color="#90e8f0"/><stop offset=".6" stop-color="#30b8d0"/><stop offset="1" stop-color="#2098b8"/></radialGradient><radialGradient id="gLens" cx=".4" cy=".35" r=".7"><stop offset="0" stop-color="#ffffff"/><stop offset="1" stop-color="#dfe6ec"/></radialGradient>
</defs>
<rect x="19.7" y="36.500" width="2" height="17" fill="#fff"/><path d="M20.2 36.500h2v17h-2" fill="none" stroke="#a8a8a8" stroke-width="1"/>
<rect x="245.7" y="36.500" width="2" height="17" fill="#fff"/><path d="M246.2 36.500h2v17h-2" fill="none" stroke="#a8a8a8" stroke-width="1"/>
<line x1="117.5" y1="34" x2="117.5" y2="56" stroke="#8c8c8c" stroke-width="1.200"/>
<line x1="167.5" y1="34" x2="167.5" y2="56" stroke="#8c8c8c" stroke-width="1.200"/>
<line x1="195.6" y1="34" x2="195.6" y2="56" stroke="#8c8c8c" stroke-width="1.200"/>
<line x1="285.4" y1="34" x2="285.4" y2="56" stroke="#8c8c8c" stroke-width="1.200"/>
<line x1="357.5" y1="34" x2="357.5" y2="56" stroke="#8c8c8c" stroke-width="1.200"/>
<rect x="32.700" y="39" width="8.600" height="11" fill="#fcfeff" stroke="#2f4a58" stroke-width="1.200"/>
<path d="M52 50V39.800h8.500v3.500" fill="#dbe9f0" stroke="#2f4a58" stroke-width="1.100"/><path d="M52 50.200L56.300 44.300h10.500L62 50.200Z" fill="#dbe9f0" stroke="#2f4a58" stroke-width="1.100" stroke-linejoin="round"/>
<path d="M74.800 39h11.400v11.300h-10l-1.400-1.400Z" fill="#dcecf4" stroke="#2f4a58" stroke-width="1.100" stroke-linejoin="round"/><rect x="77.500" y="39" width="6" height="4.500" fill="#eef6fa" stroke="#2f4a58" stroke-width="1"/><rect x="78" y="47.500" width="5.500" height="2.800" fill="#fff" stroke="#2f4a58" stroke-width="1"/>
<rect x="98.500" y="37.800" width="9" height="5" fill="#fff" stroke="#2f4a58" stroke-width="1.100"/><rect x="95.800" y="43" width="14.400" height="6.500" rx="1.500" fill="#e4f0f6" stroke="#2f4a58" stroke-width="1.100"/><path d="M98 49.500v1.800h10v-1.800" fill="#eef6fa" stroke="#2f4a58" stroke-width="1.200"/><path d="M96 47.800h14" stroke="#2f4a58" stroke-width=".8"/><circle cx="107.500" cy="45.300" r=".7" fill="#7ac060"/>
<path d="M124.500 43.500L130.500 38.500V41.500C136 41.500 139 44 139 47.500C139 50 137 51.500 134 52C135.500 51 136 50 136 48.500C136 46.500 134 45.500 130.500 45.500V48.500Z" fill="#cfe9e5" stroke="#9fd2ca" stroke-width="1" stroke-linejoin="round"/>
<path d="M160.800 43.500L154.800 38.500V41.500C149.300 41.500 146.300 44 146.300 47.500C146.300 50 148.300 51.500 151.300 52C149.800 51 149.300 50 149.300 48.500C149.300 46.500 151.300 45.500 154.800 45.500V48.500Z" fill="#d4f0dc" stroke="#a6deb6" stroke-width="1" stroke-linejoin="round"/>
<rect x="173.500" y="39.500" width="13" height="9.500" fill="#e6f0f6" stroke="#6a9ab8" stroke-width="1"/><path d="M174 40.600h12" stroke="#4a80a8" stroke-width="1.600"/><circle cx="185.300" cy="40.500" r=".9" fill="#e04040"/><circle cx="182.300" cy="47.300" r="3.300" fill="#f0f4f6"/><path d="M186.300 45.500A4.300 4.300 0 1 0 186.600 49" fill="none" stroke="#5a6672" stroke-width="1.700"/><path d="M184.300 46.300h5.200v-4.600Z" fill="#4a5662"/>
<rect x="202.600" y="38.700" width="12.600" height="12.400" rx="1" fill="#fff" stroke="#3a5868" stroke-width="1.500"/><path d="M203 51.500h12.500" stroke="#8a9aa4" stroke-width="1"/><text x="208.900" y="49" font-size="10" font-weight="bold" text-anchor="middle" font-family="'DejaVu Sans','Liberation Sans',sans-serif" fill="#2fb8b0">?</text>
<rect x="225.500" y="38.700" width="10.500" height="9.500" rx="1" fill="#f4fafc" stroke="#3a5868" stroke-width="1.400"/><path d="M225 48.500h11l2.500 3h-11.500Z" fill="#a8b8c4" stroke="#3a5868" stroke-width="1.200" stroke-linejoin="round"/><text x="230.800" y="46.700" font-size="7.800" font-weight="bold" text-anchor="middle" font-family="'DejaVu Sans','Liberation Sans',sans-serif" fill="#2fb8b0">?</text>
<rect x="262.300" y="37.300" width="2.400" height="8" fill="#fff" stroke="#8a9aa4" stroke-width=".9"/><path d="M258.500 45.500h10v3h-10Z" fill="#e4ecf0" stroke="#8a9aa4" stroke-width=".9"/><rect x="258.300" y="48.500" width="10.500" height="4.300" fill="#3a90d8"/><path d="M260 49.500v3M262 49.500v3M264 49.500v3M266 49.500v3M268 49.500v3" stroke="#bfe0f8" stroke-width=".8"/><path d="M258 53h11" stroke="#a8d8f0" stroke-width="1"/>
<path d="M274.300 44.200h4.800l-2.400 3.800Z" fill="#6c6c6c"/>
<rect x="288.500" y="34.500" width="21" height="21" fill="#cfcfcf" stroke="#b4b4b4" stroke-width="1"/>
<text x="291" y="44.600" font-size="7.300" font-weight="bold" textLength="15.800" lengthAdjust="spacingAndGlyphs" font-family="'DejaVu Sans Mono','Liberation Mono',monospace" fill="#1f8290">8.85</text><text x="291" y="52" font-size="7.300" font-weight="bold" textLength="15.800" lengthAdjust="spacingAndGlyphs" font-family="'DejaVu Sans Mono','Liberation Mono',monospace" fill="#1f8290">e-12</text>
<path d="M318.500 47.500L326 40" stroke="#8fd0c8" stroke-width="2.200"/><path d="M318.500 47.500L326 40" stroke="#e8f8f6" stroke-width=".8" stroke-dasharray="1 1"/><rect x="315.300" y="47.300" width="3.600" height="3.600" fill="#30a0b0" stroke="#1f5f7a" stroke-width="1"/>
<path d="M338 50L345.500 42.500" stroke="#8fd0c8" stroke-width="2.200"/><path d="M338 50L345.500 42.500" stroke="#e8f8f6" stroke-width=".8" stroke-dasharray="1 1"/><rect x="345" y="39.300" width="3.600" height="3.600" fill="#30a0b0" stroke="#1f5f7a" stroke-width="1"/>
<rect x="364" y="38" width="14" height="13.700" fill="url(#gMag)"/>
<path d="M386.500 37.500V51.500H400.500" fill="none" stroke="#4a6a78" stroke-width="1"/><path d="M385 39.500l1.500-2.500 1.500 2.500M398.500 50l2.500 1.500-2.500 1.500" fill="none" stroke="#4a6a78" stroke-width=".9"/><path d="M387.500 48.500C389 46 391 39 393 38.300C395 39 396 43.500 400 46.500C400.500 48.500 398 50.500 393.500 50.500C390 50.500 387.500 49.800 387.500 48.500Z" fill="url(#gMnt)"/><path d="M391.500 43.500C392.500 42 394 42 395 43.500" stroke="#fff" stroke-width="1.200" fill="none" opacity=".8"/>
<g fill="none" stroke="#c838c8" stroke-width="1.300"><path d="M408 41C410 38 416 36.800 420 38C423.500 39.500 423.500 44 422.500 47.500C421.500 50.500 420 52 418 51.700C415.500 51 414.500 48 412.500 46C410.500 44 407 43.500 408 41Z"/><path d="M411.500 41.500C413.500 39.500 417 39.300 419.500 40.500C421.500 42 421 45.500 420 48C419 50 417.800 49.500 416.500 47.500C415 45.500 410.500 43.500 411.500 41.500Z"/><path d="M415 42.500C416.500 41.500 418.500 42.500 418.500 44.500C418.500 46.500 417.500 47 416.800 45.500C416 44 414.500 43.300 415 42.500Z"/></g>
<rect x="430.700" y="38.700" width="13" height="13" fill="url(#gBtn)" stroke="#3a7088" stroke-width="1"/><path d="M432.500 45.200h8.500" stroke="#d010b8" stroke-width="1.400"/><path d="M440.300 43l2.700 2.200-2.700 2.200Z" fill="#d010b8"/>
<g transform="translate(451 38) scale(1.0)" fill="none" stroke="url(#gStr)" stroke-width="1.900"><path d="M0 5.500C1.500 4.500 3 6.500 4.500 5.500C7 3.500 7.500 .8 10 .8H16"/><path d="M0 9.300C1.500 8.300 3 10.300 4.500 9.300C7 7.300 7.500 4.600 10 4.600H16"/><path d="M0 13.100C1.500 12.100 3 14.100 4.500 13.100C7 11.100 7.500 8.400 10 8.400H16"/></g>
<rect x="474.500" y="38.700" width="13.500" height="13" fill="#ececec" stroke="#9c9c9c" stroke-width="1"/><path d="M474 38.700h14.500" stroke="#c818b8" stroke-width="1.600"/>
<rect x="497.500" y="39.500" width="11" height="9.500" rx="2" fill="#d8eef4" stroke="#5a8a98" stroke-width="1.200"/><rect x="495.300" y="42" width="2.200" height="4.500" fill="#c8e0e8" stroke="#5a8a98" stroke-width=".8"/><rect x="508.500" y="42" width="2.200" height="4.500" fill="#c8e0e8" stroke="#5a8a98" stroke-width=".8"/><path d="M501.300 41.800v5l4.200-2.500Z" fill="#8fd860" stroke="#4a9a30" stroke-width=".8"/>
<path d="M26.200 95.500L32 90.200V93.300H37.800V97.700H32V100.800Z" fill="#8ff0e8" stroke="#3fb8b0" stroke-width="1" stroke-linejoin="round"/>
<path d="M59.800 95.500L54 90.200V93.300H48.200V97.700H54V100.800Z" fill="#c4f4ee" stroke="#8fd8d0" stroke-width="1" stroke-linejoin="round"/>
<path d="M68 90.200h5l-2.500 3Z" fill="#24407a"/><path d="M74 91.300h10" stroke="#24407a" stroke-width="1.700"/><path d="M74 94.500h10M74 97h10M74 99.500h10" stroke="#4a5868" stroke-width="1"/>
<path d="M90.700 89.400v4.600l3.300-2.300Z" fill="#24407a"/><path d="M95 91.700h10.200" stroke="#24407a" stroke-width="1.700"/><path d="M95.300 97.700C97.500 94.800 102 94.800 104.300 97.700C102 100.400 97.500 100.400 95.300 97.700Z" fill="#fff" stroke="#4a5868" stroke-width="1"/><circle cx="99.800" cy="97.700" r="1.400" fill="#4a5868"/>
<rect x="112.8" y="89.500" width="2.200" height="2.200" fill="#fff" stroke="#3a5060" stroke-width="1"/><path d="M116.3 90.600h6" stroke="#3a5060" stroke-width="1.600"/><path d="M112.8 94.500h2M112.8 97.300h2M112.8 100.100h2" stroke="#9a9a9a" stroke-width="1.600"/><path d="M116.3 94.500h6M116.3 97.300h6M116.3 100.100h6" stroke="#9a9a9a" stroke-width="1.500"/><path d="M125.7 100.500V91.500M123.3 93.500l2.400-3 2.400 3" fill="none" stroke="#3a5060" stroke-width="1.300"/>
<rect x="134.5" y="89.500" width="2.200" height="2.200" fill="#fff" stroke="#3a5060" stroke-width="1"/><path d="M138 90.600h6" stroke="#3a5060" stroke-width="1.600"/><path d="M134.5 94.500h2M134.5 97.300h2M134.5 100.100h2" stroke="#3a5060" stroke-width="1.600"/><path d="M138 94.500h6M138 97.300h6M138 100.100h6" stroke="#3a5060" stroke-width="1.500"/><path d="M147.4 89.800V99M145 97l2.400 3 2.400-3" fill="none" stroke="#3a5060" stroke-width="1.300"/>
<path d="M679.4 96.8L683.3 100.7" stroke="#4a5460" stroke-width="2.400" stroke-linecap="round"/><circle cx="675.8" cy="93.2" r="4.500" fill="url(#gLens)" stroke="#7c8a96" stroke-width="2"/><path d="M673.3 93.2h5M675.8 90.7v5" stroke="#3a4450" stroke-width="1.100"/>
<path d="M701.8000000000001 96.8L705.7 100.7" stroke="#4a5460" stroke-width="2.400" stroke-linecap="round"/><circle cx="698.2" cy="93.2" r="4.500" fill="url(#gLens)" stroke="#7c8a96" stroke-width="2"/><path d="M695.7 93.2h5" stroke="#3a4450" stroke-width="1.100"/>
<path d="M725.9 96.1L729.8 100.0" stroke="#9aa2aa" stroke-width="2.400" stroke-linecap="round"/><circle cx="722.3" cy="92.5" r="4.500" fill="url(#gLens)" stroke="#b0b8c0" stroke-width="2"/><path d="M719.8 92.5h5M722.3 90.0v5" stroke="#3a4450" stroke-width="1.100"/>
<rect x="714.500" y="93.500" width="8.500" height="7" fill="none" stroke="#3a4450" stroke-width="1.100" stroke-dasharray="2 1.300"/>
<rect x="738" y="87.800" width="13.500" height="13.500" fill="#eef4f8" stroke="#8aa0b0" stroke-width="1"/><path d="M744.800 88.300l2.800 3h-5.600ZM744.800 100.900l2.800-3h-5.600ZM738.500 94.600l3-2.800v5.600ZM751.100 94.600l-3-2.800v5.600Z" fill="#38a0d0"/><path d="M742.300 94.600h5M744.800 92.100v5" stroke="#4a6a80" stroke-width="1.100"/>
<line x1="758.6" y1="84" x2="758.6" y2="106" stroke="#8c8c8c" stroke-width="1.200"/>
<line x1="794.2" y1="84" x2="794.2" y2="106" stroke="#8c8c8c" stroke-width="1.200"/>
<path d="M770.300 100V88.500" stroke="#2050d0" stroke-width="1.300"/><path d="M768.500 90.500l1.800-2.800 1.800 2.800Z" fill="#2050d0"/><path d="M770.300 100L764.500 95" stroke="#30c040" stroke-width="1.300"/><path d="M764 97.200l-.6-3.200 3.200.6Z" fill="#30c040"/><path d="M770.300 100L779.500 95.300" stroke="#e04020" stroke-width="1.300"/><path d="M777.500 94l3 .8-1.800 2.600Z" fill="#e04020"/>
<path d="M783.200 94.300h5l-2.500 3.800Z" fill="#111"/>
<path d="M800.500 91h3.200l1.200-2h6.200l1.200 2h3.200v9.800h-15Z" fill="#6a6a6a" stroke="#4a4a4a" stroke-width=".8"/><circle cx="808" cy="95.500" r="3.400" fill="#8a8a8a" stroke="#3a3a3a" stroke-width="1"/><circle cx="808" cy="95.500" r="1.600" fill="#c8c8c8"/>
<rect x="678.300" y="698.800" width="11.500" height="10" rx="1" fill="#eef6fa" stroke="#5a8aa8" stroke-width="1"/><path d="M680.500 699v10" stroke="#8ab0c8" stroke-width="1" stroke-dasharray="1 1"/><path d="M682.500 703.800l4-3.300v2.100h6.500v2.400h-6.500v2.100Z" fill="#50d040" stroke="#2a9a20" stroke-width=".7"/>
<g transform="translate(705.5 697)"><path d="M0 5.500l2 1 1.500-.5 1.500 2 2 .5 1 2.500v3h-8Z" fill="#e83020"/><path d="M0 8.500l2 .5 2 .5 2 1 2 1.500v2h-8Z" fill="#f8a020"/><path d="M0 11h8v3h-8Z" fill="#40c8e0"/><path d="M0 10.500l8 1" stroke="#f8e020" stroke-width="1"/><path d="M7 12L14 3.500L15.500 1L16 3L13 9.500Z" fill="#6aa0d0" stroke="#3a6a98" stroke-width=".8"/><path d="M7 12l3-2" stroke="#fff" stroke-width="1"/></g>
<path d="M726.300 702.500h4.400l-2.200 3Z" fill="#6a7a98"/>
<g transform="translate(241 88)"><path d="M0 5.500l2 1 1.500-.5 1.500 2 2 .5 1 2.500v3h-8Z" fill="#e83020"/><path d="M0 8.500l2 .5 2 .5 2 1 2 1.500v2h-8Z" fill="#f8a020"/><path d="M0 11h8v3h-8Z" fill="#40c8e0"/><path d="M0 10.500l8 1" stroke="#f8e020" stroke-width="1"/><path d="M7 12L14 3.500L15.500 1L16 3L13 9.500Z" fill="#6aa0d0" stroke="#3a6a98" stroke-width=".8"/><path d="M7 12l3-2" stroke="#fff" stroke-width="1"/></g>
<rect x="641" y="88.700" width="10.500" height="9.500" rx="1" fill="#f4fafc" stroke="#3a5868" stroke-width="1.300"/><path d="M640.500 98.500h11l2.500 3h-11.500Z" fill="#a8b8c4" stroke="#3a5868" stroke-width="1.200" stroke-linejoin="round"/><text x="646.300" y="96.700" font-size="7.800" font-weight="bold" text-anchor="middle" font-family="'DejaVu Sans','Liberation Sans',sans-serif" fill="#2fb8b0">?</text>
<path d="M22.500 66.500h15.500" stroke="#7a8a94" stroke-width="1" fill="none"/><path d="M27.500 63.300v14.200" stroke="#6a7a86" stroke-width="2.300"/><path d="M27.500 63.300v14.200" stroke="#b8c4cc" stroke-width=".6"/><path d="M22.900 65v3.400M33.700 66.500v7.500" stroke="#7a8a94" stroke-width="1"/><rect x="32.300" y="73.800" width="2.900" height="3" fill="#58a0e0" stroke="#3a80c8" stroke-width=".5"/>
<g transform="translate(241 63.5) scale(1.0)" fill="none" stroke="url(#gStr)" stroke-width="1.900"><path d="M0 5.500C1.500 4.500 3 6.500 4.500 5.500C7 3.500 7.500 .8 10 .8H16"/><path d="M0 9.300C1.500 8.300 3 10.300 4.500 9.300C7 7.300 7.500 4.600 10 4.600H16"/><path d="M0 13.100C1.500 12.100 3 14.100 4.500 13.100C7 11.100 7.500 8.400 10 8.400H16"/></g>
<rect x="340.500" y="63.500" width="12" height="13" fill="#3aa0d0" stroke="#2a7a98" stroke-width="1"/><rect x="347" y="64" width="5" height="12" fill="#30b0a8"/><path d="M343.300 64.500v11M346.300 64.500v11M349.300 64.500v11" stroke="#eafaff" stroke-width="1.200" stroke-dasharray="4 1.500 2 1"/>
<g stroke-width=".5" stroke="#3a7a8a"><circle cx="444.0" cy="67.5" r="2.100" fill="#38c878"/><circle cx="444.0" cy="70.30000000000001" r="2.100" fill="#e8d840"/><circle cx="444.0" cy="73.10000000000001" r="2.100" fill="#40b8c8"/><circle cx="447.7" cy="66.10000000000001" r="2.100" fill="#40d0e8"/><circle cx="447.7" cy="68.9" r="2.100" fill="#f0a030"/><circle cx="447.7" cy="71.7" r="2.100" fill="#e8a040"/><circle cx="447.7" cy="74.5" r="2.100" fill="#e04088"/><circle cx="451.4" cy="67.5" r="2.100" fill="#a050e0"/><circle cx="451.4" cy="70.30000000000001" r="2.100" fill="#c040d8"/><circle cx="451.4" cy="73.10000000000001" r="2.100" fill="#e04890"/></g>
<path d="M678.500 63L682.800 74.500Q679 76.500 675.500 74.500Z" fill="url(#gCone)"/><circle cx="673.300" cy="73.300" r="3.800" fill="url(#gSph)"/>
<rect x="668.500" y="675" width="14.500" height="9.500" fill="#f4fafc" stroke="#8aa8c0" stroke-width="1"/><path d="M669 675.500l6.800 5 6.800-5" fill="none" stroke="#a8c0d4" stroke-width="1"/>
<rect x="748.500" y="676.500" width="14.500" height="5" rx="1" fill="#e8e8e8" stroke="#a8a8a8" stroke-width="1"/><rect x="749" y="677" width="8.500" height="4" fill="#80d040"/><path d="M751 677v4M753 677v4M755 677v4" stroke="#a8e878" stroke-width=".7"/>
<rect x="836.500" y="673.500" width="13.500" height="12" fill="#f8fbfd" stroke="#8aa0b4" stroke-width="1"/><path d="M839 677h9M839 680h9M839 683h9" stroke="#8aa0b4" stroke-width="1.200" stroke-dasharray="1.800 1.500"/>
<rect x="886.500" y="673" width="10.500" height="13.500" fill="#f4f9fc" stroke="#8aa8c0" stroke-width="1"/><path d="M888.500 676h6.500M888.500 678.500h6.500M888.500 681h6.500M888.500 683.500h6.500" stroke="#8aa8c0" stroke-width="1"/>
</svg>
</body>
</html>
